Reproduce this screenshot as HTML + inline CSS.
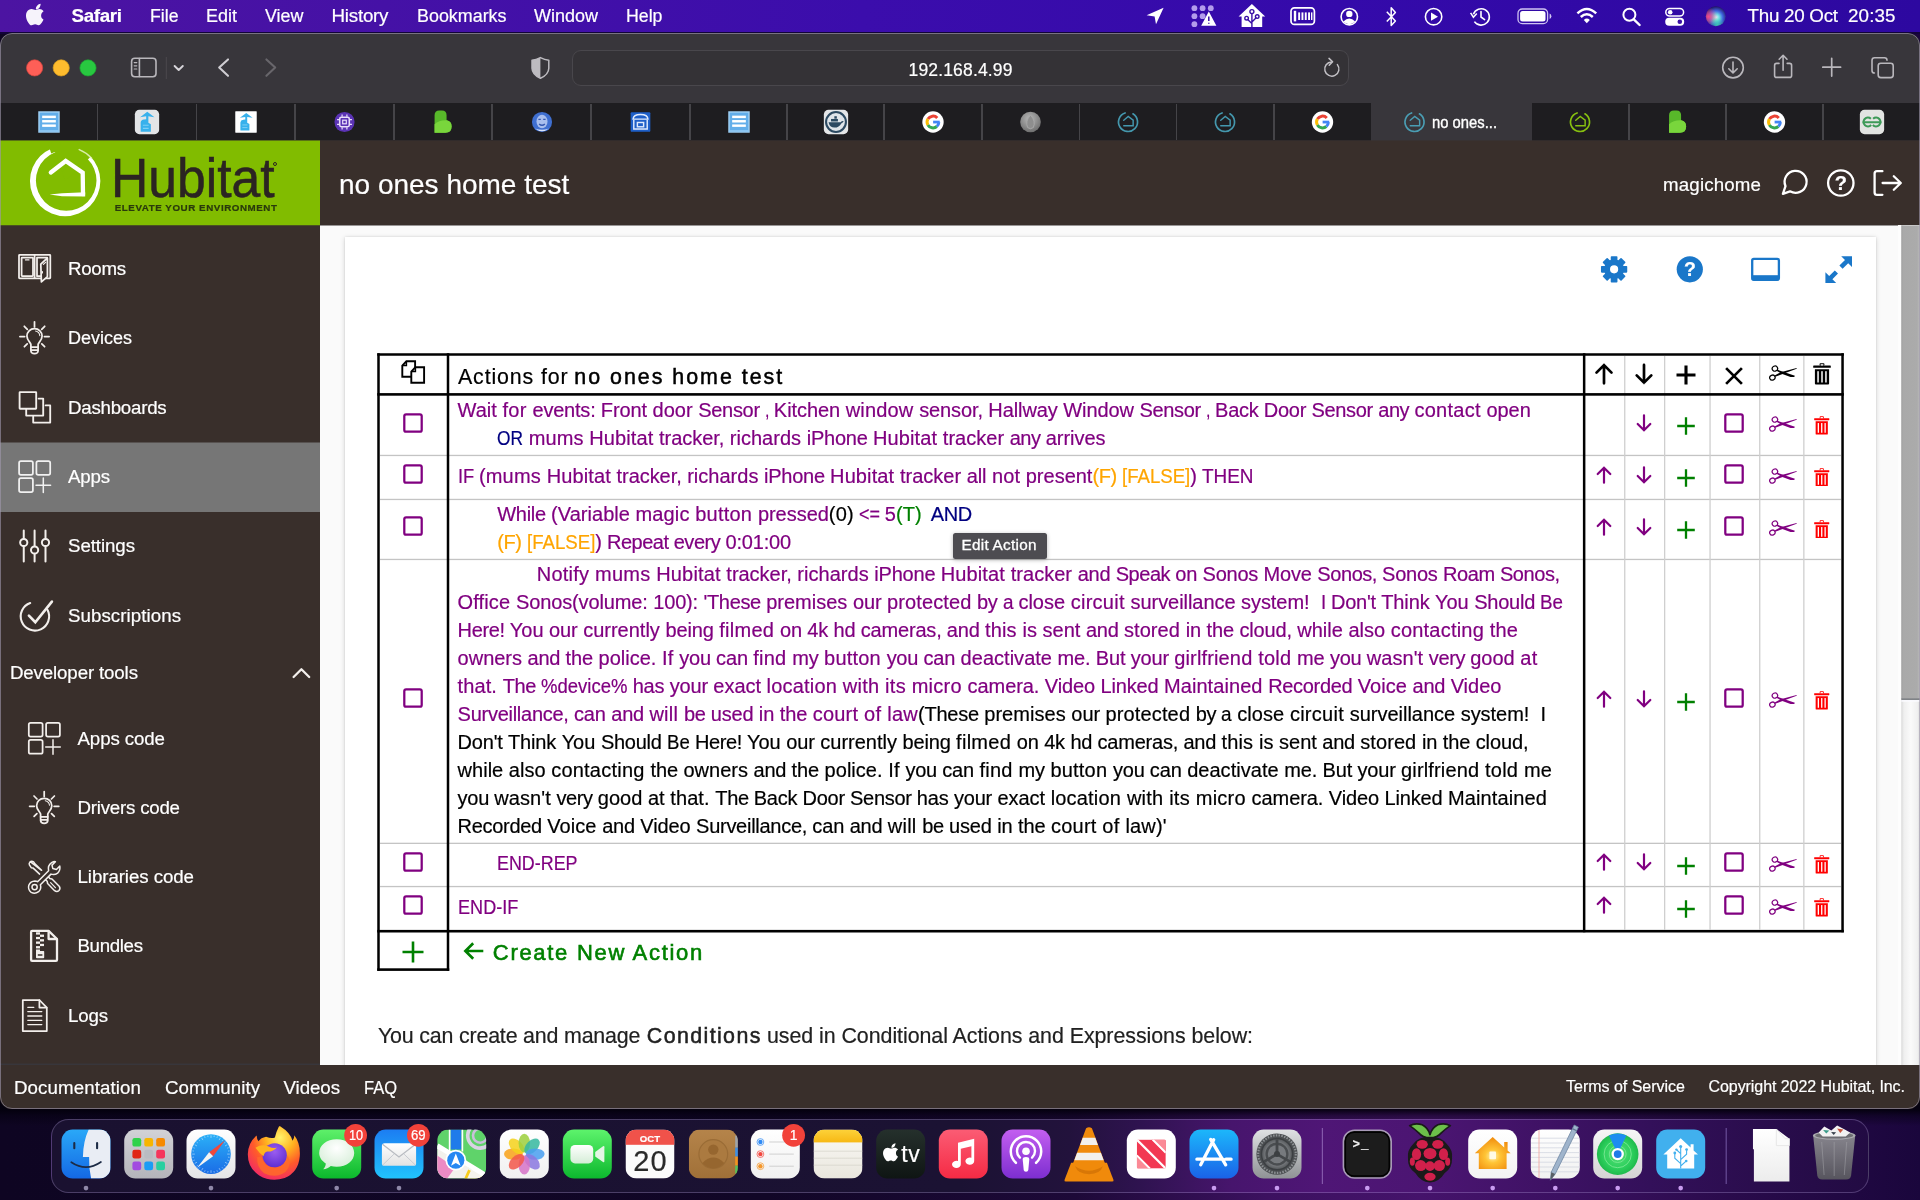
<!DOCTYPE html>
<html lang="en"><head><meta charset="utf-8"><title>no ones home test</title>
<style>
*{box-sizing:border-box;margin:0;padding:0}
html,body{width:1920px;height:1200px;overflow:hidden;background:#12062a}
body{position:relative;font-family:"Liberation Sans",sans-serif;-webkit-font-smoothing:antialiased}
body div,body svg,body span.t{position:absolute;display:block}
.t{white-space:pre;line-height:1;-webkit-text-stroke-width:.2px}
.t span{letter-spacing:inherit}
.ln{left:0;top:0;width:0;height:0}

</style></head>
<body>
<div id="root" style="left:0;top:0;width:1920px;height:1200px;will-change:transform">
<div style="left:0;top:0;width:1920px;height:1200px;background:linear-gradient(90deg,#0e0522 0%,#110627 40%,#1d0938 56%,#3c1160 66%,#45136b 74%,#3a1060 82%,#2a0b4c 90%,#1a063c 100%)"></div>
<div style="left:0;top:0;width:1920px;height:33px;background:linear-gradient(90deg,#4c14a2 0%,#4511a6 20%,#3b0dac 45%,#340aaa 70%,#2d08a0 100%)"></div>
<div style="left:0;top:32px;width:1920px;height:2px;background:#120338"></div>
<div style="left:0;top:1100px;width:1920px;height:26px;background:linear-gradient(180deg,rgba(3,0,12,.95),rgba(3,0,12,.9) 38%,rgba(3,0,12,.45) 60%,rgba(3,0,12,0))"></div>
<div id="win" style="left:0;top:0;width:1920px;height:1200px;clip-path:inset(33px 0 91px 0 round 12px)">
<div style="left:0px;top:33px;width:1920px;height:1076px;background:#38363b;"></div>
<svg style="left:0px;top:103px" width="1920" height="38" viewBox="0 103 1920 38"><rect x="0" y="103" width="1920" height="37.5" fill="#1e1d20"/></svg>
<svg style="left:20px;top:55px" width="90" height="26" viewBox="20 55 90 26"><circle cx="34.6" cy="67.9" r="8.1" fill="#fe5f57" stroke="#d8453d" stroke-width=".7"/><circle cx="61.2" cy="67.9" r="8.1" fill="#febc2e" stroke="#d79c1f" stroke-width=".7"/><circle cx="88.0" cy="67.9" r="8.1" fill="#28c840" stroke="#1ba430" stroke-width=".7"/></svg>
<div style="left:572px;top:50px;width:777px;height:36px;border-radius:9px;background:#343236;border:1.3px solid #49474c"></div>
<span class="t" style="top:62px;font-size:17.5px;color:#fff;letter-spacing:0.165px;left:908.50px;">192.168.4.99</span>
<div style="left:96.75px;top:104px;width:1.5px;height:36px;background:#454448"></div>
<div style="left:195.75px;top:104px;width:1.5px;height:36px;background:#454448"></div>
<div style="left:294.25px;top:104px;width:1.5px;height:36px;background:#454448"></div>
<div style="left:393.25px;top:104px;width:1.5px;height:36px;background:#454448"></div>
<div style="left:491.25px;top:104px;width:1.5px;height:36px;background:#454448"></div>
<div style="left:590.25px;top:104px;width:1.5px;height:36px;background:#454448"></div>
<div style="left:689.25px;top:104px;width:1.5px;height:36px;background:#454448"></div>
<div style="left:786.25px;top:104px;width:1.5px;height:36px;background:#454448"></div>
<div style="left:883.25px;top:104px;width:1.5px;height:36px;background:#454448"></div>
<div style="left:981.25px;top:104px;width:1.5px;height:36px;background:#454448"></div>
<div style="left:1078.75px;top:104px;width:1.5px;height:36px;background:#454448"></div>
<div style="left:1175.75px;top:104px;width:1.5px;height:36px;background:#454448"></div>
<div style="left:1273.25px;top:104px;width:1.5px;height:36px;background:#454448"></div>
<div style="left:1628.25px;top:104px;width:1.5px;height:36px;background:#454448"></div>
<div style="left:1725.25px;top:104px;width:1.5px;height:36px;background:#454448"></div>
<div style="left:1822.25px;top:104px;width:1.5px;height:36px;background:#454448"></div>
<div style="left:1371px;top:103px;width:161px;height:37.5px;background:#38363b"></div>
<span class="t" style="top:115px;font-size:16.6px;color:#fff;letter-spacing:0px;transform:scaleX(0.8917);transform-origin:0 0;left:1432.3px;-webkit-text-stroke:0.35px #fff;">no ones...</span>
<svg style="left:0;top:40px" width="1920" height="60" viewBox="0 40 1920 60"><g fill="none" stroke="#b9b7bc" stroke-width="1.6" stroke-linecap="round" stroke-linejoin="round" ><rect x="131.6" y="58.3" width="24.4" height="18.4" rx="3.2"/><path d="M139.4 58.6 V76.4"/><path d="M134.2 62.6 H136.8 M134.2 65.8 H136.8 M134.2 69 H136.8" stroke-width="1.2"/></g><rect x="165.8" y="57" width="1" height="22" fill="#4b494e"/><g fill="none" stroke="#d6d4d9" stroke-width="1.9" stroke-linecap="round" stroke-linejoin="round" ><path d="M174.6 66 L178.7 70 L182.8 66"/></g><g fill="none" stroke="#cfcdd2" stroke-width="2.1" stroke-linecap="round" stroke-linejoin="round" ><path d="M228 59.4 L219.2 67.6 L228 75.8"/></g><g fill="none" stroke="#68666b" stroke-width="2.1" stroke-linecap="round" stroke-linejoin="round" ><path d="M266.4 59.4 L275.2 67.6 L266.4 75.8"/></g><path d="M540.4 57.6 Q544.6 59.8 548.8 60.2 V68.2 Q548.6 74.6 540.4 78.2 Q532.2 74.6 532 68.2 V60.2 Q536.2 59.8 540.4 57.6 Z" fill="#38363b" stroke="#bdbbc0" stroke-width="1.5" stroke-linejoin="round"/><path d="M540.4 57.6 Q536.2 59.8 532 60.2 V68.2 Q532.2 74.6 540.4 78.2 Z" fill="#bdbbc0"/><g fill="none" stroke="#c2c0c5" stroke-width="1.5" stroke-linecap="round" stroke-linejoin="round" ><path d="M1337.4 64.6 A7.1 7.1 0 1 1 1331.6 61.9"/><path d="M1329.0 58.4 L1332.6 61.8 L1329.2 65.2"/></g><g fill="none" stroke="#b9b7bc" stroke-width="1.6" stroke-linecap="round" stroke-linejoin="round" ><circle cx="1733" cy="67.6" r="10.3"/><path d="M1733 62 V72.6 M1728.8 68.8 L1733 73 L1737.2 68.8"/></g><g fill="none" stroke="#b9b7bc" stroke-width="1.6" stroke-linecap="round" stroke-linejoin="round" ><path d="M1779 63.4 H1776.6 Q1774.6 63.4 1774.6 65.4 V75.4 Q1774.6 77.4 1776.6 77.4 H1789.6 Q1791.6 77.4 1791.6 75.4 V65.4 Q1791.6 63.4 1789.6 63.4 H1787.2"/><path d="M1783.1 55.6 V70.2 M1779.2 59.2 L1783.1 55.3 L1787 59.2"/></g><g fill="none" stroke="#b9b7bc" stroke-width="1.7" stroke-linecap="round" stroke-linejoin="round" ><path d="M1822.8 67.2 H1840.6 M1831.7 58.3 V76.1"/></g><g fill="none" stroke="#b9b7bc" stroke-width="1.6" stroke-linecap="round" stroke-linejoin="round" ><path d="M1874.4 73 Q1872 73 1872 70.4 V60.4 Q1872 57.8 1874.6 57.8 H1884.4 Q1887 57.8 1887 60.2"/><rect x="1878.2" y="63.2" width="15" height="14.4" rx="2.6"/></g></svg>
<svg style="left:0;top:104px" width="1920" height="36" viewBox="0 104 1920 36"><g transform="translate(49 122.0) scale(1.22) translate(-49 -122.0)"><rect x="40.8" y="113.8" width="16.4" height="16.4" fill="#62aeea" stroke="#9fd0f5" stroke-width="1.2"/><g fill="#fff"><rect x="43.4" y="116.8" width="11.2" height="2"/><rect x="43.4" y="120.4" width="11.2" height="2"/><rect x="43.4" y="124.0" width="11.2" height="2"/></g><rect x="40.8" y="128.6" width="16.4" height="1.6" fill="#8cc6f2"/></g><g transform="translate(147 122.0) scale(1.38) translate(-147 -122.0)"><rect x="138.2" y="113.2" width="17.6" height="17.6" rx="3.2" fill="#e3e5e7"/><path d="M142.4 129.0 V122.4 Q142.6 120.4 144.8 120.2 L146.4 120.0 V117.8 L142 118.6 L147.2 114.6 L152.4 118.6 L148 117.8 V122.6 L149.8 123.6 V129.0 Z" fill="#38b1ec"/><path d="M144 124.4 H148.2 M144 126.6 H148.2" stroke="#7fd0f5" stroke-width=".8" fill="none"/></g><g transform="translate(246 122.0) scale(1.22) translate(-246 -122.0)"><rect x="237.2" y="113.2" width="17.6" height="17.6" rx="0.4" fill="#fff"/><path d="M241.4 129.0 V122.4 Q241.6 120.4 243.8 120.2 L245.4 120.0 V117.8 L241 118.6 L246.2 114.6 L251.4 118.6 L247 117.8 V122.6 L248.8 123.6 V129.0 Z" fill="#38b1ec"/><path d="M243 124.4 H247.2 M243 126.6 H247.2" stroke="#7fd0f5" stroke-width=".8" fill="none"/></g><g transform="translate(344.5 122.0) scale(1.2) translate(-344.5 -122.0)"><circle cx="344.5" cy="122.0" r="8.4" fill="#5b33b5"/><rect x="340.5" y="118.0" width="8" height="8" rx="1.4" fill="none" stroke="#e9defa" stroke-width="1.3"/><rect x="343.0" y="120.5" width="3" height="3" fill="none" stroke="#e9defa" stroke-width="1"/><path d="M342.5 115.8 V117.6 M346.5 115.8 V117.6 M342.5 126.4 V128.2 M346.5 126.4 V128.2 M338.3 120.0 H340.1 M338.3 124.0 H340.1 M348.9 120.0 H350.7 M348.9 124.0 H350.7" stroke="#e9defa" stroke-width="1" fill="none"/></g><g transform="translate(442.5 122.0) scale(1.2) translate(-442.5 -122.0)"><path d="M435.9 131.0 V116.4 Q435.9 112.4 439.9 112.4 H442.1 Q445.9 112.4 445.9 116.4 V120.6 Q450.1 121.4 450.1 125.8 Q450.1 131.0 444.9 131.0 Z" fill="#58b82a"/><path d="M435.9 131.0 V123.8 Q439.5 120.4 445.9 120.6 Q450.1 121.4 450.1 125.8 Q450.1 131.0 444.9 131.0 Z" fill="#79d63c"/></g><g transform="translate(542 122.0) scale(1.2) translate(-542 -122.0)"><circle cx="542" cy="122.0" r="8.4" fill="#3f6fd0"/><ellipse cx="542" cy="121.6" rx="4.6" ry="5.6" fill="#a9bfee"/><path d="M539.6 123.6 Q542 125.8 544.4 123.6" stroke="#3558b0" stroke-width="1.1" fill="none"/><path d="M539 119.8 H541 M543 119.8 H545" stroke="#3558b0" stroke-width="1.1"/><path d="M536.2 127.4 Q542 132.0 547.8 127.4 Q542 129.6 536.2 127.4Z" fill="#d9e4fb"/></g><g transform="translate(640.5 122.0) scale(1.2) translate(-640.5 -122.0)"><rect x="632.3" y="113.8" width="16.4" height="16.4" rx="1" fill="#1e5fc8"/><g fill="none" stroke="#dfeafc" stroke-width="1.2"><path d="M634.9 120.2 V127.8 H646.1 V120.2"/><path d="M634.3 119.6 Q634.5 115.8 640.5 115.8 Q646.5 115.8 646.7 119.6 Z"/><rect x="637.9" y="122.4" width="5.2" height="3.6"/></g></g><g transform="translate(739 122.0) scale(1.22) translate(-739 -122.0)"><rect x="730.8" y="113.8" width="16.4" height="16.4" fill="#62aeea" stroke="#9fd0f5" stroke-width="1.2"/><g fill="#fff"><rect x="733.4" y="116.8" width="11.2" height="2"/><rect x="733.4" y="120.4" width="11.2" height="2"/><rect x="733.4" y="124.0" width="11.2" height="2"/></g><rect x="730.8" y="128.6" width="16.4" height="1.6" fill="#8cc6f2"/></g><g transform="translate(836 122.0) scale(1.38) translate(-836 -122.0)"><rect x="827.2" y="113.2" width="17.6" height="17.6" rx="3.4" fill="#e4e6e8"/><circle cx="836" cy="122.0" r="7.2" fill="#dfe5ea" stroke="#2c4a62" stroke-width="1.5"/><path d="M830.6 122.2 H839.4 Q840.4 120.8 841.6 121.4 Q840.6 122.6 839.8 123.0 Q838.4 126.0 834.8 126.0 Q831.4 126.0 830.6 122.2 Z" fill="#2c4a62"/><rect x="832.4" y="119.8" width="5" height="1.8" fill="#2c4a62"/><rect x="834.8" y="117.8" width="1.8" height="1.8" fill="#2c4a62"/></g><g transform="translate(933 122.0) scale(1.2) translate(-933 -122.0)"><circle cx="933" cy="122.0" r="8.9" fill="#fff"/><g fill="none" stroke-width="2.5"><path d="M936.55 118.6 A4.9 4.9 0 0 0 928.75 119.55" stroke="#ea4335"/><path d="M928.75 119.55 A4.9 4.9 0 0 0 928.75 124.45" stroke="#fbbc05"/><path d="M928.75 124.45 A4.9 4.9 0 0 0 936.2 125.75" stroke="#34a853"/><path d="M936.2 125.75 A4.9 4.9 0 0 0 937.85 122.2" stroke="#4285f4"/></g><rect x="933.1" y="120.9" width="5.5" height="2.3" fill="#4285f4"/></g><g transform="translate(1030.5 122.0) scale(1.2) translate(-1030.5 -122.0)"><defs><radialGradient id="gs1030" cx="45%" cy="35%" r="65%"><stop offset="0" stop-color="#b9b9b9"/><stop offset="1" stop-color="#6f6f6f"/></radialGradient></defs><circle cx="1030.5" cy="122.0" r="8.6" fill="url(#gs1030)"/><path d="M1030.5 116.4 Q1035.1 121.0 1032.9 126.6 Q1030.5 128.6 1028.1 126.6 Q1025.9 121.0 1030.5 116.4 Z" fill="#8e8e8e" stroke="#a8a8a8" stroke-width=".8"/></g><g transform="translate(1128 122.0) scale(1.12) translate(-1128 -122.0)"><g fill="none" stroke="#4497ad" stroke-linecap="round"><path d="M1125.4 113.9 A8.5 8.5 0 1 0 1132.4 114.7" stroke-width="1.5"/><path d="M1124.2 120.4 L1128.2 117.1 L1132.6 120.3 V125.4 H1124.2" stroke-width="1.3" stroke-linejoin="miter"/></g></g><g transform="translate(1225 122.0) scale(1.12) translate(-1225 -122.0)"><g fill="none" stroke="#4497ad" stroke-linecap="round"><path d="M1222.4 113.9 A8.5 8.5 0 1 0 1229.4 114.7" stroke-width="1.5"/><path d="M1221.2 120.4 L1225.2 117.1 L1229.6 120.3 V125.4 H1221.2" stroke-width="1.3" stroke-linejoin="miter"/></g></g><g transform="translate(1322.5 122.0) scale(1.2) translate(-1322.5 -122.0)"><circle cx="1322.5" cy="122.0" r="8.9" fill="#fff"/><g fill="none" stroke-width="2.5"><path d="M1326.05 118.6 A4.9 4.9 0 0 0 1318.25 119.55" stroke="#ea4335"/><path d="M1318.25 119.55 A4.9 4.9 0 0 0 1318.25 124.45" stroke="#fbbc05"/><path d="M1318.25 124.45 A4.9 4.9 0 0 0 1325.7 125.75" stroke="#34a853"/><path d="M1325.7 125.75 A4.9 4.9 0 0 0 1327.35 122.2" stroke="#4285f4"/></g><rect x="1322.6" y="120.9" width="5.5" height="2.3" fill="#4285f4"/></g><g transform="translate(1414.5 122.0) scale(1.12) translate(-1414.5 -122.0)"><g fill="none" stroke="#4a9db3" stroke-linecap="round"><path d="M1411.9 113.9 A8.5 8.5 0 1 0 1418.9 114.7" stroke-width="1.5"/><path d="M1410.7 120.4 L1414.7 117.1 L1419.1 120.3 V125.4 H1410.7" stroke-width="1.3" stroke-linejoin="miter"/></g></g><g transform="translate(1580 122.0) scale(1.12) translate(-1580 -122.0)"><g fill="none" stroke="#86bf10" stroke-linecap="round"><path d="M1577.4 113.9 A8.5 8.5 0 1 0 1584.4 114.7" stroke-width="1.5"/><path d="M1576.2 120.4 L1580.2 117.1 L1584.6 120.3 V125.4 H1576.2" stroke-width="1.3" stroke-linejoin="miter"/></g></g><g transform="translate(1677 122.0) scale(1.2) translate(-1677 -122.0)"><path d="M1670.4 131.0 V116.4 Q1670.4 112.4 1674.4 112.4 H1676.6 Q1680.4 112.4 1680.4 116.4 V120.6 Q1684.6 121.4 1684.6 125.8 Q1684.6 131.0 1679.4 131.0 Z" fill="#58b82a"/><path d="M1670.4 131.0 V123.8 Q1674 120.4 1680.4 120.6 Q1684.6 121.4 1684.6 125.8 Q1684.6 131.0 1679.4 131.0 Z" fill="#79d63c"/></g><g transform="translate(1774.5 122.0) scale(1.2) translate(-1774.5 -122.0)"><circle cx="1774.5" cy="122.0" r="8.9" fill="#fff"/><g fill="none" stroke-width="2.5"><path d="M1778.05 118.6 A4.9 4.9 0 0 0 1770.25 119.55" stroke="#ea4335"/><path d="M1770.25 119.55 A4.9 4.9 0 0 0 1770.25 124.45" stroke="#fbbc05"/><path d="M1770.25 124.45 A4.9 4.9 0 0 0 1777.7 125.75" stroke="#34a853"/><path d="M1777.7 125.75 A4.9 4.9 0 0 0 1779.35 122.2" stroke="#4285f4"/></g><rect x="1774.6" y="120.9" width="5.5" height="2.3" fill="#4285f4"/></g><g transform="translate(1872 122.0) scale(1.38) translate(-1872 -122.0)"><rect x="1863.2" y="113.2" width="17.6" height="17.6" rx="3.4" fill="#e2e4e2"/><g fill="none" stroke="#3d9a58" stroke-width="1.5"><path d="M1871.2 119.6 A3.2 3.2 0 1 0 1871.4 124.2 M1865 122.2 H1879 M1872.8 119.6 A3.2 3.2 0 1 1 1872.6 124.2"/></g></g></svg>
<svg style="left:0px;top:140px" width="1920" height="86" viewBox="0 140 1920 86"><rect x="0" y="140.5" width="1920" height="85" fill="#392f2b"/></svg>
<svg style="left:0px;top:140px" width="320" height="86" viewBox="0 140 320 86"><rect x="0" y="140.5" width="320" height="85" fill="#81bc00"/></svg>
<svg style="left:0px;top:225px" width="320" height="839" viewBox="0 225 320 839"><rect x="0" y="225.5" width="320" height="838" fill="#392f2b"/></svg>
<svg style="left:0px;top:442px" width="320" height="70" viewBox="0 442 320 70"><rect x="0" y="442.5" width="320" height="69.5" fill="#767676"/></svg>
<svg style="left:320px;top:225px" width="1578" height="841" viewBox="320 225 1578 841"><rect x="320" y="225.5" width="1578" height="840" fill="#fafafa"/></svg>
<div style="left:1898px;top:225px;width:4px;height:840px;background:#fdfdfd"></div>
<svg style="left:1901px;top:225px" width="19" height="840" viewBox="1901 225 19 840"><defs><linearGradient id="sbt" x1="0" y1="0" x2="1" y2="0"><stop offset="0" stop-color="#d9d9d9"/><stop offset=".14" stop-color="#efefef"/><stop offset=".5" stop-color="#fafafa"/><stop offset=".86" stop-color="#f0f0f0"/><stop offset="1" stop-color="#dcdcdc"/></linearGradient><linearGradient id="sbh" x1="0" y1="0" x2="1" y2="0"><stop offset="0" stop-color="#a2a2a2"/><stop offset=".12" stop-color="#a9a9a9"/><stop offset=".85" stop-color="#ababab"/><stop offset="1" stop-color="#bcbcbc"/></linearGradient></defs><rect x="1901.3" y="225" width="18.7" height="840" fill="url(#sbt)"/><rect x="1901.3" y="225.4" width="18.7" height="473.2" fill="url(#sbh)"/><rect x="1901.3" y="698.2" width="18.7" height="1.9" fill="#808387"/><rect x="1901.3" y="700.1" width="18.7" height="1.6" fill="#fbfbff"/></svg>
<div style="left:345px;top:237px;width:1531px;height:840px;background:#fff;box-shadow:0 1px 5px rgba(0,0,0,.16),0 0 2px rgba(0,0,0,.1)"></div>
<span class="t" style="top:171px;font-size:28px;color:#fff;letter-spacing:-0.005px;left:339px;">no ones home test</span>
<span class="t" style="top:176px;font-size:18.7px;color:#fff;letter-spacing:0.174px;left:1663px;">magichome</span>
<span class="t" style="top:151px;font-size:55.5px;color:#2b2422;letter-spacing:0px;transform:scaleX(0.9303);transform-origin:0 0;left:110.8px;-webkit-text-stroke:0.55px #2b2422;">Hubitat</span>
<span class="t" style="top:203px;font-size:9.8px;color:#2a3a0c;font-weight:700;letter-spacing:0.548px;left:114.7px;">ELEVATE YOUR ENVIRONMENT</span>
<span class="t" style="top:260px;font-size:18.7px;color:#fff;letter-spacing:-0.301px;left:68px;">Rooms</span>
<span class="t" style="top:329px;font-size:18.7px;color:#fff;letter-spacing:0px;transform:scaleX(0.9629);transform-origin:0 0;left:68px;">Devices</span>
<span class="t" style="top:399px;font-size:18.7px;color:#fff;letter-spacing:-0.230px;left:68px;">Dashboards</span>
<span class="t" style="top:468px;font-size:18.7px;color:#fff;letter-spacing:-0.203px;left:68px;">Apps</span>
<span class="t" style="top:537px;font-size:18.7px;color:#fff;letter-spacing:-0.076px;left:68px;">Settings</span>
<span class="t" style="top:607px;font-size:18.7px;color:#fff;letter-spacing:0.068px;left:68px;">Subscriptions</span>
<span class="t" style="top:664px;font-size:18.7px;color:#fff;letter-spacing:-0.133px;left:10px;">Developer tools</span>
<span class="t" style="top:730px;font-size:18.7px;color:#fff;letter-spacing:-0.102px;left:77.5px;">Apps code</span>
<span class="t" style="top:799px;font-size:18.7px;color:#fff;letter-spacing:-0.217px;left:77.5px;">Drivers code</span>
<span class="t" style="top:868px;font-size:18.7px;color:#fff;letter-spacing:-0.069px;left:77.5px;">Libraries code</span>
<span class="t" style="top:937px;font-size:18.7px;color:#fff;letter-spacing:-0.341px;left:77.5px;">Bundles</span>
<span class="t" style="top:1007px;font-size:18.7px;color:#fff;letter-spacing:-0.177px;left:68px;">Logs</span>
<svg style="left:20px;top:140px" width="100" height="86" viewBox="20 140 100 86"><path fill="#fff" fill-rule="evenodd" d="M29.95 181 a35.2 35.2 0 1 0 70.4 0 a35.2 35.2 0 1 0 -70.4 0 Z M35.9 180.5 a30.3 30.3 0 1 0 60.6 0 a30.3 30.3 0 1 0 -60.6 0 Z"/><path fill="#81bc00" d="M65.2 181 L51.6 142 L84 142 L96.5 152.5 L91.2 156.2 Z"/><path fill="#81bc00" d="M65.2 181 L55.9 151.6 L51.2 153.4 L48 143 L60 142 Z"/><path d="M79.2 149.6 Q86.6 152.6 91.6 158.2" fill="none" stroke="#e9f6c4" stroke-width="1.5" stroke-linecap="round" opacity=".85"/><path d="M50.8 172.5 L65.7 161.0 L82.7 172.6 L83.0 194.2" fill="none" stroke="#fff" stroke-width="4.3" stroke-linejoin="miter" stroke-linecap="round"/><path d="M85.15 192.2 L85.2 196.5 L62 196.3 L49.6 194.5 L62 193.2 Z" fill="#fff"/></svg>
<div style="left:272.5px;top:161.5px;width:4.6px;height:4.6px;border-radius:50%;border:1px solid #2b2422"></div>
<svg style="left:0;top:0" width="320" height="1063" viewBox="0 0 320 1063"><g fill="none" stroke="#f3efec" stroke-width="1.75" stroke-linecap="round" stroke-linejoin="round" ><g transform="translate(0 0)"><rect x="19" y="254.8" width="31.3" height="23.6" rx="0.6"/><rect x="21.6" y="257.5" width="11.4" height="18.6" rx="0.5"/><path d="M34.6 255 V278.2"/><path d="M41.0 276.2 H37 V257.6 H47.2"/><path d="M40.8 264.2 L47.4 258 V276.6 L41.4 281.9 Z" fill="#3a2f2b"/><path d="M43.4 264.4 L45.6 262.4 M42.4 271.6 V273" stroke-width="1.2"/><path d="M25.4 259.9 H29" stroke-width="1.1"/></g></g><g fill="none" stroke="#f3efec" stroke-width="1.75" stroke-linecap="round" stroke-linejoin="round" ><g transform="translate(0 0)"><path d="M30.9 347 V344.4 C30.9 342.6 26.9 340.6 26.9 336.1 C26.9 331.9 30.3 328.6 34.5 328.6 C38.7 328.6 42.1 331.9 42.1 336.1 C42.1 340.6 38.1 342.6 38.1 344.4 V347"/><path d="M30.9 347.2 H38.1 M30.9 350.2 H38.1 M30.9 347.2 V351 Q31.2 353.7 34.5 353.7 Q37.8 353.7 38.1 351 V347.2"/><path d="M34.5 321.8 V326.9 M19.9 336.6 H24.6 M44.4 336.6 H49.1 M24.3 326.3 L27.3 329.3 M44.7 326.3 L41.7 329.3 M24.4 346.7 L27.2 343.9 M44.6 346.7 L41.8 343.9"/><path d="M35.6 331 Q39.4 331.8 39.8 335.6" stroke-width="1.1"/></g></g><g fill="none" stroke="#f3efec" stroke-width="1.85" stroke-linecap="round" stroke-linejoin="round" ><g transform="translate(0 0)"><rect x="19.6" y="392.1" width="16.6" height="16.6" rx="0.4"/><path d="M38.6 398.6 H43.2 V415.6 H26.2 V409.6"/><path d="M45.6 405.4 H50.2 V422.6 H33.2 V416.4"/></g></g><g fill="none" stroke="#f1f1f1" stroke-width="1.75" stroke-linecap="round" stroke-linejoin="round" ><g transform="translate(0 0)"><rect x="19.1" y="461.1" width="13.8" height="13.8" rx="1.8"/><rect x="36.4" y="461.1" width="13.8" height="13.8" rx="1.8"/><rect x="19.1" y="478.2" width="13.8" height="13.8" rx="1.8"/><path d="M36 485.3 H50.6 M43.3 478 V492.6" stroke-width="1.5"/></g></g><g fill="none" stroke="#f3efec" stroke-width="2.0" stroke-linecap="round" stroke-linejoin="round" ><g transform="translate(0 0)"><path d="M23.75 530.4 V538.6 M23.75 546.4 V561.4 M34.6 530.4 V546.1 M34.6 553.9 V561.4 M45.5 530.4 V538.6 M45.5 546.4 V561.4"/><circle cx="23.75" cy="542.5" r="3.6"/><circle cx="34.6" cy="550" r="3.6"/><circle cx="45.5" cy="542.5" r="3.6"/></g></g><g fill="none" stroke="#f3efec" stroke-width="1.6" stroke-linecap="round" stroke-linejoin="round" ><g transform="translate(0 0)"><path d="M30.2 603.0 A14.2 14.2 0 1 0 47.6 610.0" stroke-width="2.1"/><path d="M28.9 615.6 L35.3 622.2 L51.9 601.6" stroke-width="2.6" stroke-linejoin="miter"/></g></g><g fill="none" stroke="#f3efec" stroke-width="1.75" stroke-linecap="round" stroke-linejoin="round" ><g transform="translate(9.7 261.7)"><rect x="19.1" y="461.1" width="13.8" height="13.8" rx="1.8"/><rect x="36.4" y="461.1" width="13.8" height="13.8" rx="1.8"/><rect x="19.1" y="478.2" width="13.8" height="13.8" rx="1.8"/><path d="M36 485.3 H50.6 M43.3 478 V492.6" stroke-width="1.5"/></g></g><g fill="none" stroke="#f3efec" stroke-width="1.75" stroke-linecap="round" stroke-linejoin="round" ><g transform="translate(9.7 469.7)"><path d="M30.9 347 V344.4 C30.9 342.6 26.9 340.6 26.9 336.1 C26.9 331.9 30.3 328.6 34.5 328.6 C38.7 328.6 42.1 331.9 42.1 336.1 C42.1 340.6 38.1 342.6 38.1 344.4 V347"/><path d="M30.9 347.2 H38.1 M30.9 350.2 H38.1 M30.9 347.2 V351 Q31.2 353.7 34.5 353.7 Q37.8 353.7 38.1 351 V347.2"/><path d="M34.5 321.8 V326.9 M19.9 336.6 H24.6 M44.4 336.6 H49.1 M24.3 326.3 L27.3 329.3 M44.7 326.3 L41.7 329.3 M24.4 346.7 L27.2 343.9 M44.6 346.7 L41.8 343.9"/><path d="M35.6 331 Q39.4 331.8 39.8 335.6" stroke-width="1.1"/></g></g><g fill="none" stroke="#f3efec" stroke-width="1.5" stroke-linecap="round" stroke-linejoin="round" ><g transform="translate(28 860.5)"><path d="M2.2 1.2 Q0.6 2.6 1.4 4.4 L3.2 7.2 L5.2 7.6 L11.6 13.6 M13.6 9.8 L7.2 3.6 L5.6 1.4 Q3.8 0.2 2.2 1.2 Z" /><path d="M17.6 19.4 L19.2 20.8 L19.6 23.0 L26.6 30.2 Q29.0 32.0 31.0 30.0 Q32.8 28.0 31.2 25.8 L24.0 18.4 L21.8 18.0 L20.6 16.6"/><path d="M22.6 22.2 L27.4 27.2" stroke-width="1.2"/><path d="M9.6 21.2 L20.6 10.2 Q19.4 4.6 24.0 1.8 Q26.0 0.8 27.4 1.2 L24.0 4.6 L24.8 8.0 L28.4 9.0 L31.8 5.6 Q32.6 9.8 29.6 12.6 Q26.6 14.8 23.0 13.6 L12.4 24.2 Q13.6 28.4 10.6 31.2 Q7.0 33.8 3.2 31.8 Q-0.4 29.2 0.8 24.8 Q2.4 20.6 7.0 20.4 Q8.4 20.4 9.6 21.2 Z"/><circle cx="6.6" cy="26.6" r="2.6"/></g></g><g fill="none" stroke="#f3efec" stroke-width="2.3" stroke-linecap="round" stroke-linejoin="round" ><g transform="translate(0 0)"><path d="M31.1 931.9 Q31.1 930.9 32.1 930.9 H48.6 L57 939.0 V959.8 Q57 960.9 56 960.9 H32.1 Q31.1 960.9 31.1 959.8 Z"/><path d="M48.6 931.4 V939 H56.6"/></g></g><g fill="#f3efec" transform="translate(0 0)"><rect x="36" y="932.3" width="4" height="2.3"/><rect x="40" y="934.6" width="4" height="2.3"/><rect x="36" y="936.9" width="4" height="2.3"/><rect x="40" y="939.2" width="4" height="2.3"/><rect x="36" y="941.5" width="4" height="2.3"/><rect x="40" y="943.8" width="4" height="2.3"/><rect x="36" y="946.1" width="4" height="2.3"/><path d="M36 949.6 H40 V951 H43.6 Q44.2 951 44.2 951.8 V957.4 Q44.2 958.2 43.4 958.2 H36.8 Q36 958.2 36 957.4 Z M37.8 954.2 V955.8 H42.4 V954.2 Z" fill-rule="evenodd"/></g><g fill="none" stroke="#f3efec" stroke-width="1.75" stroke-linecap="round" stroke-linejoin="round" ><g transform="translate(0 0)"><path d="M22.8 1000 H39.4 L46.8 1007.6 V1031 H22.8 Z"/><path d="M39.4 1000.2 V1007.6 H46.6"/><path d="M27.8 1007.3 H33.8 M27.8 1011.6 H41.8 M27.8 1016 H41.8 M27.8 1020.3 H41.8 M27.8 1024.6 H41.8" stroke-width="1.35"/></g></g><g fill="none" stroke="#f3efec" stroke-width="2.3" stroke-linecap="round" stroke-linejoin="round" stroke-linecap="butt" stroke-linejoin="miter"><path d="M293.6 677 L301.4 669.2 L309.2 677"/></g></svg>
<svg style="left:1770px;top:158px" width="150" height="50" viewBox="1770 158 150 50"><g fill="none" stroke="#fff" stroke-width="2.3" stroke-linecap="round" stroke-linejoin="round" ><path d="M1782.9 193.8 L1785.5 186.2 A11.0 11.0 0 1 1 1790.0 191.3 Z"/></g><g fill="none" stroke="#fff" stroke-width="2.3" stroke-linecap="round" stroke-linejoin="round" ><circle cx="1840.8" cy="183.0" r="12.7"/></g><g fill="none" stroke="#fff" stroke-width="2.3" stroke-linecap="round" stroke-linejoin="round" ><path d="M1882.4 171.2 H1877.0 Q1874.6 171.2 1874.6 173.6 V192.4 Q1874.6 194.8 1877.0 194.8 H1882.4"/><path d="M1882.6 183 H1900.6 M1893.8 176.2 L1900.8 183 L1893.8 189.8"/></g></svg>
<span class="t" style="top:173px;font-size:20px;color:#fff;font-weight:700;left:1840.9px;transform:translateX(-50%);">?</span>
<svg style="left:1590px;top:245px" width="280" height="50" viewBox="1590 245 280 50"><path d="M1611.53 260.47 L1611.54 256.96 L1616.66 256.96 L1616.67 260.47 L1618.53 261.24 L1621.02 258.77 L1624.63 262.38 L1622.16 264.87 L1622.93 266.73 L1626.44 266.74 L1626.44 271.86 L1622.93 271.87 L1622.16 273.73 L1624.63 276.22 L1621.02 279.83 L1618.53 277.36 L1616.67 278.13 L1616.66 281.64 L1611.54 281.64 L1611.53 278.13 L1609.67 277.36 L1607.18 279.83 L1603.57 276.22 L1606.04 273.73 L1605.27 271.87 L1601.76 271.86 L1601.76 266.74 L1605.27 266.73 L1606.04 264.87 L1603.57 262.38 L1607.18 258.77 L1609.67 261.24 Z M1609.20 269.30 a4.9 4.9 0 1 0 9.8 0 a4.9 4.9 0 1 0 -9.8 0 Z" fill="#1a77c9" fill-rule="evenodd" stroke="#1a77c9" stroke-width="1.6" stroke-linejoin="round"/><circle cx="1689.8" cy="269.3" r="13.1" fill="#1a77c9"/><rect x="1752.2" y="258.9" width="26.7" height="20.9" rx="1.6" fill="none" stroke="#1a77c9" stroke-width="2.3"/><rect x="1752.2" y="275.2" width="26.7" height="5" fill="#1a77c9"/><g fill="#1a77c9"><path d="M1841.2 256.2 H1852 V267 L1848.2 263.2 L1842.6 268.8 L1839.4 265.6 L1845 260 Z"/><path d="M1825.4 283 V272.2 L1829.2 276 L1834.8 270.4 L1838 273.6 L1832.4 279.2 L1836.2 283 Z"/></g></svg>
<span class="t" style="top:260px;font-size:19.5px;color:#fff;font-weight:700;left:1689.9px;transform:translateX(-50%);">?</span>
<svg style="left:380px;top:454px" width="1461" height="3" viewBox="380 454 1461 3"><rect x="380" y="454.8" width="1461" height="1.3" fill="#c4c4c4"/></svg>
<svg style="left:380px;top:498px" width="1461" height="3" viewBox="380 498 1461 3"><rect x="380" y="498.8" width="1461" height="1.3" fill="#c4c4c4"/></svg>
<svg style="left:380px;top:558px" width="1461" height="3" viewBox="380 558 1461 3"><rect x="380" y="558.8" width="1461" height="1.3" fill="#c4c4c4"/></svg>
<svg style="left:380px;top:842px" width="1461" height="2" viewBox="380 842 1461 2"><rect x="380" y="842.7" width="1461" height="1.3" fill="#c4c4c4"/></svg>
<svg style="left:380px;top:885px" width="1461" height="3" viewBox="380 885 1461 3"><rect x="380" y="885.9" width="1461" height="1.3" fill="#c4c4c4"/></svg>
<svg style="left:1624px;top:356px" width="2" height="574" viewBox="1624 356 2 574"><rect x="1624.1" y="356" width="1.3" height="573.5" fill="#cfcfcf"/></svg>
<svg style="left:1664px;top:356px" width="2" height="574" viewBox="1664 356 2 574"><rect x="1664" y="356" width="1.3" height="573.5" fill="#cfcfcf"/></svg>
<svg style="left:1709px;top:356px" width="2" height="574" viewBox="1709 356 2 574"><rect x="1709.4" y="356" width="1.3" height="573.5" fill="#cfcfcf"/></svg>
<svg style="left:1759px;top:356px" width="2" height="574" viewBox="1759 356 2 574"><rect x="1759.1" y="356" width="1.3" height="573.5" fill="#cfcfcf"/></svg>
<svg style="left:1803px;top:356px" width="2" height="574" viewBox="1803 356 2 574"><rect x="1803.2" y="356" width="1.3" height="573.5" fill="#cfcfcf"/></svg>
<svg style="left:377px;top:353px" width="1467" height="3" viewBox="377 353 1467 3"><rect x="377.25" y="353.25" width="1466.6" height="2.5" fill="#000"/></svg>
<svg style="left:377px;top:393px" width="1467" height="3" viewBox="377 393 1467 3"><rect x="377.25" y="393.1" width="1466.6" height="2.6" fill="#000"/></svg>
<svg style="left:377px;top:929px" width="1467" height="4" viewBox="377 929 1467 4"><rect x="377.25" y="929.9" width="1466.6" height="2.6" fill="#000"/></svg>
<svg style="left:377px;top:353px" width="3" height="618" viewBox="377 353 3 618"><rect x="377.25" y="353.25" width="2.5" height="617.6" fill="#000"/></svg>
<svg style="left:446px;top:353px" width="4" height="618" viewBox="446 353 4 618"><rect x="446.75" y="353.25" width="2.5" height="617.6" fill="#000"/></svg>
<svg style="left:377px;top:968px" width="73" height="3" viewBox="377 968 73 3"><rect x="377.25" y="968.3" width="72" height="2.6" fill="#000"/></svg>
<svg style="left:1582px;top:353px" width="4" height="580" viewBox="1582 353 4 580"><rect x="1582.9" y="353.25" width="2.5" height="579" fill="#000"/></svg>
<svg style="left:1841px;top:353px" width="3" height="580" viewBox="1841 353 3 580"><rect x="1841.3" y="353.25" width="2.5" height="579" fill="#000"/></svg>
<span class="t" style="top:367px;font-size:21.4px;color:#000;letter-spacing:0.854px;left:458px;">Actions for</span>
<span class="t" style="top:367px;font-size:21.4px;color:#000;letter-spacing:1.994px;left:574.3px;-webkit-text-stroke:0.5px #000;">no ones home test</span>
<div class="ln"><span class="t" style="top:400px;font-size:20px;color:#800080;letter-spacing:0.007px;left:457.60px;">Wait </span><span class="t" style="top:400px;font-size:20px;color:#800080;letter-spacing:0.274px;left:502.46px;">for </span><span class="t" style="top:400px;font-size:20px;color:#800080;letter-spacing:-0.205px;left:532.47px;">events: </span><span class="t" style="top:400px;font-size:20px;color:#800080;letter-spacing:-0.102px;left:600.87px;">Front </span><span class="t" style="top:400px;font-size:20px;color:#800080;letter-spacing:0.024px;left:652.51px;">door </span><span class="t" style="top:400px;font-size:20px;color:#800080;letter-spacing:-0.307px;left:698.22px;">Sensor </span><span class="t" style="top:400px;font-size:20px;color:#800080;letter-spacing:0px;transform:scaleX(0.7962);transform-origin:0 0;left:765.01px;">, </span><span class="t" style="top:400px;font-size:20px;color:#800080;letter-spacing:-0.054px;left:773.87px;">Kitchen </span><span class="t" style="top:400px;font-size:20px;color:#800080;letter-spacing:0.166px;left:845.70px;">window </span><span class="t" style="top:400px;font-size:20px;color:#800080;letter-spacing:-0.111px;left:919.13px;">sensor, </span><span class="t" style="top:400px;font-size:20px;color:#800080;letter-spacing:-0.072px;left:988.28px;">Hallway </span><span class="t" style="top:400px;font-size:20px;color:#800080;letter-spacing:-0.081px;left:1063.29px;">Window </span><span class="t" style="top:400px;font-size:20px;color:#800080;letter-spacing:-0.307px;left:1139.42px;">Sensor </span><span class="t" style="top:400px;font-size:20px;color:#800080;letter-spacing:0px;transform:scaleX(0.7962);transform-origin:0 0;left:1206.21px;">, </span><span class="t" style="top:400px;font-size:20px;color:#800080;letter-spacing:-0.250px;left:1215.07px;">Back </span><span class="t" style="top:400px;font-size:20px;color:#800080;letter-spacing:-0.275px;left:1263.85px;">Door </span><span class="t" style="top:400px;font-size:20px;color:#800080;letter-spacing:-0.307px;left:1311.38px;">Sensor </span><span class="t" style="top:400px;font-size:20px;color:#800080;letter-spacing:-0.391px;left:1378.17px;">any </span><span class="t" style="top:400px;font-size:20px;color:#800080;letter-spacing:0.259px;left:1414.42px;">contact </span><span class="t" style="top:400px;font-size:20px;color:#800080;letter-spacing:-0.085px;left:1486.54px;">open</span></div>
<div class="ln"><span class="t" style="top:428px;font-size:20px;color:#000080;letter-spacing:0px;transform:scaleX(0.8649);transform-origin:0 0;left:497.20px;">OR</span><span class="t" style="top:428px;font-size:20px;color:#800080;letter-spacing:0.073px;left:523.15px;"> mums </span><span class="t" style="top:428px;font-size:20px;color:#800080;letter-spacing:0.125px;left:589.15px;">Hubitat </span><span class="t" style="top:428px;font-size:20px;color:#800080;letter-spacing:-0.048px;left:659.08px;">tracker, </span><span class="t" style="top:428px;font-size:20px;color:#800080;letter-spacing:0.027px;left:729.79px;">richards </span><span class="t" style="top:428px;font-size:20px;color:#800080;letter-spacing:-0.238px;left:806.73px;">iPhone </span><span class="t" style="top:428px;font-size:20px;color:#800080;letter-spacing:0.125px;left:872.91px;">Hubitat </span><span class="t" style="top:428px;font-size:20px;color:#800080;letter-spacing:0.014px;left:942.85px;">tracker </span><span class="t" style="top:428px;font-size:20px;color:#800080;letter-spacing:-0.412px;left:1009.64px;">any </span><span class="t" style="top:428px;font-size:20px;color:#800080;letter-spacing:-0.060px;left:1045.81px;">arrives</span></div>
<div class="ln"><span class="t" style="top:466px;font-size:20px;color:#800080;letter-spacing:0px;transform:scaleX(0.9133);transform-origin:0 0;left:457.60px;">IF </span><span class="t" style="top:466px;font-size:20px;color:#800080;letter-spacing:0.186px;left:478.92px;">(mums </span><span class="t" style="top:466px;font-size:20px;color:#800080;letter-spacing:0.113px;left:546.71px;">Hubitat </span><span class="t" style="top:466px;font-size:20px;color:#800080;letter-spacing:-0.059px;left:616.55px;">tracker, </span><span class="t" style="top:466px;font-size:20px;color:#800080;letter-spacing:0.016px;left:687.16px;">richards </span><span class="t" style="top:466px;font-size:20px;color:#800080;letter-spacing:-0.251px;left:764.01px;">iPhone </span><span class="t" style="top:466px;font-size:20px;color:#800080;letter-spacing:0.113px;left:830.09px;">Hubitat </span><span class="t" style="top:466px;font-size:20px;color:#800080;letter-spacing:0.003px;left:899.94px;">tracker </span><span class="t" style="top:466px;font-size:20px;color:#800080;letter-spacing:-0.047px;left:966.64px;">all </span><span class="t" style="top:466px;font-size:20px;color:#800080;letter-spacing:0.092px;left:992.03px;">not </span><span class="t" style="top:466px;font-size:20px;color:#800080;letter-spacing:-0.007px;left:1025.76px;">present</span><span class="t" style="top:466px;font-size:20px;color:#ffa500;letter-spacing:-0.368px;left:1092.43px;">(F) </span><span class="t" style="top:466px;font-size:20px;color:#ffa500;letter-spacing:0px;transform:scaleX(0.9308);transform-origin:0 0;left:1122.05px;">[FALSE]</span><span class="t" style="top:466px;font-size:20px;color:#800080;letter-spacing:-0.192px;left:1190.35px;">) </span><span class="t" style="top:466px;font-size:20px;color:#800080;letter-spacing:0px;transform:scaleX(0.9460);transform-origin:0 0;left:1202.19px;">THEN</span></div>
<div class="ln"><span class="t" style="top:504px;font-size:20px;color:#800080;letter-spacing:-0.278px;left:497.20px;">While </span><span class="t" style="top:504px;font-size:20px;color:#800080;letter-spacing:0.028px;left:551.11px;">(Variable </span><span class="t" style="top:504px;font-size:20px;color:#800080;letter-spacing:0.147px;left:635.51px;">magic </span><span class="t" style="top:504px;font-size:20px;color:#800080;letter-spacing:0.202px;left:695.30px;">button </span><span class="t" style="top:504px;font-size:20px;color:#800080;letter-spacing:-0.029px;left:757.89px;">pressed</span><span class="t" style="top:504px;font-size:20px;color:#000;letter-spacing:0.173px;left:828.84px;">(0)</span><span class="t" style="top:504px;font-size:20px;color:#800080;letter-spacing:0px;transform:scaleX(0.8986);transform-origin:0 0;left:853.81px;"> &lt;= </span><span class="t" style="top:504px;font-size:20px;color:#800080;letter-spacing:0.084px;left:884.80px;">5</span><span class="t" style="top:504px;font-size:20px;color:#008000;letter-spacing:0.042px;left:896.01px;">(T)</span><span class="t" style="top:504px;font-size:20px;color:#000080;letter-spacing:-0.406px;left:921.68px;">  AND</span></div>
<div class="ln"><span class="t" style="top:532px;font-size:20px;color:#ffa500;letter-spacing:-0.367px;left:497.20px;">(F) </span><span class="t" style="top:532px;font-size:20px;color:#ffa500;letter-spacing:0px;transform:scaleX(0.9309);transform-origin:0 0;left:526.82px;">[FALSE]</span><span class="t" style="top:532px;font-size:20px;color:#800080;letter-spacing:-0.191px;left:595.13px;">) </span><span class="t" style="top:532px;font-size:20px;color:#800080;letter-spacing:-0.480px;left:606.97px;">Repeat </span><span class="t" style="top:532px;font-size:20px;color:#800080;letter-spacing:-0.451px;left:673.67px;">every </span><span class="t" style="top:532px;font-size:20px;color:#800080;letter-spacing:-0.182px;left:725.44px;">0:01:00</span></div>
<div class="ln"><span class="t" style="top:564px;font-size:20px;color:#800080;letter-spacing:0.226px;left:536.80px;">Notify </span><span class="t" style="top:564px;font-size:20px;color:#800080;letter-spacing:0.240px;left:595.07px;">mums </span><span class="t" style="top:564px;font-size:20px;color:#800080;letter-spacing:0.144px;left:656.27px;">Hubitat </span><span class="t" style="top:564px;font-size:20px;color:#800080;letter-spacing:-0.032px;left:726.36px;">tracker, </span><span class="t" style="top:564px;font-size:20px;color:#800080;letter-spacing:0.045px;left:797.22px;">richards </span><span class="t" style="top:564px;font-size:20px;color:#800080;letter-spacing:-0.218px;left:874.33px;">iPhone </span><span class="t" style="top:564px;font-size:20px;color:#800080;letter-spacing:0.144px;left:940.64px;">Hubitat </span><span class="t" style="top:564px;font-size:20px;color:#800080;letter-spacing:0.032px;left:1010.73px;">tracker </span><span class="t" style="top:564px;font-size:20px;color:#800080;letter-spacing:-0.221px;left:1077.67px;">and </span><span class="t" style="top:564px;font-size:20px;color:#800080;letter-spacing:-0.460px;left:1115.73px;">Speak </span><span class="t" style="top:564px;font-size:20px;color:#800080;letter-spacing:-0.162px;left:1175.23px;">on </span><span class="t" style="top:564px;font-size:20px;color:#800080;letter-spacing:-0.239px;left:1202.56px;">Sonos </span><span class="t" style="top:564px;font-size:20px;color:#800080;letter-spacing:-0.099px;left:1263.39px;">Move </span><span class="t" style="top:564px;font-size:20px;color:#800080;letter-spacing:-0.440px;left:1317.37px;">Sonos, </span><span class="t" style="top:564px;font-size:20px;color:#800080;letter-spacing:-0.239px;left:1382.11px;">Sonos </span><span class="t" style="top:564px;font-size:20px;color:#800080;letter-spacing:-0.392px;left:1442.95px;">Roam </span><span class="t" style="top:564px;font-size:20px;color:#800080;letter-spacing:-0.409px;left:1499.89px;">Sonos,</span></div>
<div class="ln"><span class="t" style="top:592px;font-size:20px;color:#800080;letter-spacing:0.124px;left:457.60px;">Office </span><span class="t" style="top:592px;font-size:20px;color:#800080;letter-spacing:-0.120px;left:515.91px;">Sonos(volume: </span><span class="t" style="top:592px;font-size:20px;color:#800080;letter-spacing:-0.148px;left:653.20px;">100): </span><span class="t" style="top:592px;font-size:20px;color:#800080;letter-spacing:-0.327px;left:703.47px;">'These </span><span class="t" style="top:592px;font-size:20px;color:#800080;letter-spacing:0.016px;left:766.14px;">premises </span><span class="t" style="top:592px;font-size:20px;color:#800080;letter-spacing:-0.108px;left:852.99px;">our </span><span class="t" style="top:592px;font-size:20px;color:#800080;letter-spacing:0.109px;left:887.02px;">protected </span><span class="t" style="top:592px;font-size:20px;color:#800080;letter-spacing:-0.380px;left:977.07px;">by </span><span class="t" style="top:592px;font-size:20px;color:#800080;letter-spacing:0px;transform:scaleX(0.9454);transform-origin:0 0;left:1002.62px;">a </span><span class="t" style="top:592px;font-size:20px;color:#800080;letter-spacing:0.027px;left:1018.39px;">close </span><span class="t" style="top:592px;font-size:20px;color:#800080;letter-spacing:0.240px;left:1070.80px;">circuit </span><span class="t" style="top:592px;font-size:20px;color:#800080;letter-spacing:-0.051px;left:1130.52px;">surveillance </span><span class="t" style="top:592px;font-size:20px;color:#800080;letter-spacing:-0.054px;left:1241.03px;">system!  </span><span class="t" style="top:592px;font-size:20px;color:#800080;letter-spacing:0px;transform:scaleX(0.9308);transform-origin:0 0;left:1320.55px;">I </span><span class="t" style="top:592px;font-size:20px;color:#800080;letter-spacing:-0.213px;left:1330.91px;">Don't </span><span class="t" style="top:592px;font-size:20px;color:#800080;letter-spacing:-0.121px;left:1381.25px;">Think </span><span class="t" style="top:592px;font-size:20px;color:#800080;letter-spacing:-0.013px;left:1435.00px;">You </span><span class="t" style="top:592px;font-size:20px;color:#800080;letter-spacing:-0.239px;left:1474.26px;">Should </span><span class="t" style="top:592px;font-size:20px;color:#800080;letter-spacing:0px;transform:scaleX(0.9387);transform-origin:0 0;left:1540.43px;">Be</span></div>
<div class="ln"><span class="t" style="top:620px;font-size:20px;color:#800080;letter-spacing:-0.380px;left:457.60px;">Here! </span><span class="t" style="top:620px;font-size:20px;color:#800080;letter-spacing:-0.003px;left:509.79px;">You </span><span class="t" style="top:620px;font-size:20px;color:#800080;letter-spacing:-0.100px;left:549.09px;">our </span><span class="t" style="top:620px;font-size:20px;color:#800080;letter-spacing:0.001px;left:583.15px;">currently </span><span class="t" style="top:620px;font-size:20px;color:#800080;letter-spacing:-0.126px;left:665.41px;">being </span><span class="t" style="top:620px;font-size:20px;color:#800080;letter-spacing:0.279px;left:719.16px;">filmed </span><span class="t" style="top:620px;font-size:20px;color:#800080;letter-spacing:-0.162px;left:780.02px;">on </span><span class="t" style="top:620px;font-size:20px;color:#800080;letter-spacing:-0.144px;left:807.34px;">4k </span><span class="t" style="top:620px;font-size:20px;color:#800080;letter-spacing:-0.211px;left:833.60px;">hd </span><span class="t" style="top:620px;font-size:20px;color:#800080;letter-spacing:-0.190px;left:860.78px;">cameras, </span><span class="t" style="top:620px;font-size:20px;color:#800080;letter-spacing:-0.221px;left:946.87px;">and </span><span class="t" style="top:620px;font-size:20px;color:#800080;letter-spacing:0.177px;left:984.92px;">this </span><span class="t" style="top:620px;font-size:20px;color:#800080;letter-spacing:0.023px;left:1022.50px;">is </span><span class="t" style="top:620px;font-size:20px;color:#800080;letter-spacing:-0.007px;left:1042.57px;">sent </span><span class="t" style="top:620px;font-size:20px;color:#800080;letter-spacing:-0.221px;left:1085.89px;">and </span><span class="t" style="top:620px;font-size:20px;color:#800080;letter-spacing:0.077px;left:1123.94px;">stored </span><span class="t" style="top:620px;font-size:20px;color:#800080;letter-spacing:-0.112px;left:1185.64px;">in </span><span class="t" style="top:620px;font-size:20px;color:#800080;letter-spacing:-0.086px;left:1206.42px;">the </span><span class="t" style="top:620px;font-size:20px;color:#800080;letter-spacing:-0.167px;left:1239.44px;">cloud, </span><span class="t" style="top:620px;font-size:20px;color:#800080;letter-spacing:0.006px;left:1297.21px;">while </span><span class="t" style="top:620px;font-size:20px;color:#800080;letter-spacing:0.010px;left:1348.38px;">also </span><span class="t" style="top:620px;font-size:20px;color:#800080;letter-spacing:0.219px;left:1390.68px;">contacting </span><span class="t" style="top:620px;font-size:20px;color:#800080;letter-spacing:0.088px;left:1489.82px;">the</span></div>
<div class="ln"><span class="t" style="top:648px;font-size:20px;color:#800080;letter-spacing:-0.017px;left:457.60px;">owners </span><span class="t" style="top:648px;font-size:20px;color:#800080;letter-spacing:-0.223px;left:527.51px;">and </span><span class="t" style="top:648px;font-size:20px;color:#800080;letter-spacing:-0.088px;left:565.56px;">the </span><span class="t" style="top:648px;font-size:20px;color:#800080;letter-spacing:0.009px;left:598.56px;">police. </span><span class="t" style="top:648px;font-size:20px;color:#800080;letter-spacing:0.205px;left:662.01px;">If </span><span class="t" style="top:648px;font-size:20px;color:#800080;letter-spacing:-0.266px;left:679.30px;">you </span><span class="t" style="top:648px;font-size:20px;color:#800080;letter-spacing:-0.144px;left:716.05px;">can </span><span class="t" style="top:648px;font-size:20px;color:#800080;letter-spacing:0.229px;left:753.28px;">find </span><span class="t" style="top:648px;font-size:20px;color:#800080;letter-spacing:-0.120px;left:792.24px;">my </span><span class="t" style="top:648px;font-size:20px;color:#800080;letter-spacing:0.195px;left:824.10px;">button </span><span class="t" style="top:648px;font-size:20px;color:#800080;letter-spacing:-0.266px;left:886.64px;">you </span><span class="t" style="top:648px;font-size:20px;color:#800080;letter-spacing:-0.144px;left:923.39px;">can </span><span class="t" style="top:648px;font-size:20px;color:#800080;letter-spacing:0.024px;left:960.62px;">deactivate </span><span class="t" style="top:648px;font-size:20px;color:#800080;letter-spacing:-0.167px;left:1057.62px;">me. </span><span class="t" style="top:648px;font-size:20px;color:#800080;letter-spacing:-0.177px;left:1095.86px;">But </span><span class="t" style="top:648px;font-size:20px;color:#800080;letter-spacing:-0.194px;left:1130.73px;">your </span><span class="t" style="top:648px;font-size:20px;color:#800080;letter-spacing:0.148px;left:1174.23px;">girlfriend </span><span class="t" style="top:648px;font-size:20px;color:#800080;letter-spacing:0.222px;left:1258.13px;">told </span><span class="t" style="top:648px;font-size:20px;color:#800080;letter-spacing:-0.118px;left:1297.05px;">me </span><span class="t" style="top:648px;font-size:20px;color:#800080;letter-spacing:-0.266px;left:1330.04px;">you </span><span class="t" style="top:648px;font-size:20px;color:#800080;letter-spacing:0.062px;left:1366.79px;">wasn't </span><span class="t" style="top:648px;font-size:20px;color:#800080;letter-spacing:-0.398px;left:1428.85px;">very </span><span class="t" style="top:648px;font-size:20px;color:#800080;letter-spacing:0.014px;left:1470.20px;">good </span><span class="t" style="top:648px;font-size:20px;color:#800080;letter-spacing:0.339px;left:1520.33px;">at</span></div>
<div class="ln"><span class="t" style="top:676px;font-size:20px;color:#800080;letter-spacing:0.102px;left:457.60px;">that. </span><span class="t" style="top:676px;font-size:20px;color:#800080;letter-spacing:-0.401px;left:502.69px;">The </span><span class="t" style="top:676px;font-size:20px;color:#800080;letter-spacing:0px;transform:scaleX(0.9255);transform-origin:0 0;left:541.12px;">%device% </span><span class="t" style="top:676px;font-size:20px;color:#800080;letter-spacing:-0.180px;left:632.68px;">has </span><span class="t" style="top:676px;font-size:20px;color:#800080;letter-spacing:-0.187px;left:669.78px;">your </span><span class="t" style="top:676px;font-size:20px;color:#800080;letter-spacing:-0.019px;left:713.31px;">exact </span><span class="t" style="top:676px;font-size:20px;color:#800080;letter-spacing:0.194px;left:766.55px;">location </span><span class="t" style="top:676px;font-size:20px;color:#800080;letter-spacing:0.236px;left:842.80px;">with </span><span class="t" style="top:676px;font-size:20px;color:#800080;letter-spacing:0.260px;left:885.11px;">its </span><span class="t" style="top:676px;font-size:20px;color:#800080;letter-spacing:0.237px;left:911.71px;">micro </span><span class="t" style="top:676px;font-size:20px;color:#800080;letter-spacing:-0.077px;left:967.59px;">camera. </span><span class="t" style="top:676px;font-size:20px;color:#800080;letter-spacing:-0.108px;left:1044.78px;">Video </span><span class="t" style="top:676px;font-size:20px;color:#800080;letter-spacing:-0.143px;left:1100.49px;">Linked </span><span class="t" style="top:676px;font-size:20px;color:#800080;letter-spacing:0.069px;left:1163.99px;">Maintained </span><span class="t" style="top:676px;font-size:20px;color:#800080;letter-spacing:-0.309px;left:1268.16px;">Recorded </span><span class="t" style="top:676px;font-size:20px;color:#800080;letter-spacing:0.069px;left:1357.66px;">Voice </span><span class="t" style="top:676px;font-size:20px;color:#800080;letter-spacing:-0.215px;left:1412.56px;">and </span><span class="t" style="top:676px;font-size:20px;color:#800080;letter-spacing:-0.006px;left:1450.63px;">Video</span></div>
<div class="ln"><span class="t" style="top:704px;font-size:20px;color:#800080;letter-spacing:-0.266px;left:457.60px;">Surveillance, </span><span class="t" style="top:704px;font-size:20px;color:#800080;letter-spacing:-0.121px;left:573.94px;">can </span><span class="t" style="top:704px;font-size:20px;color:#800080;letter-spacing:-0.199px;left:611.27px;">and </span><span class="t" style="top:704px;font-size:20px;color:#800080;letter-spacing:0.239px;left:649.41px;">will </span><span class="t" style="top:704px;font-size:20px;color:#800080;letter-spacing:-0.349px;left:683.95px;">be </span><span class="t" style="top:704px;font-size:20px;color:#800080;letter-spacing:-0.156px;left:710.71px;">used </span><span class="t" style="top:704px;font-size:20px;color:#800080;letter-spacing:-0.096px;left:758.87px;">in </span><span class="t" style="top:704px;font-size:20px;color:#800080;letter-spacing:-0.067px;left:779.71px;">the </span><span class="t" style="top:704px;font-size:20px;color:#800080;letter-spacing:0.186px;left:812.80px;">court </span><span class="t" style="top:704px;font-size:20px;color:#800080;letter-spacing:0.349px;left:863.95px;">of </span><span class="t" style="top:704px;font-size:20px;color:#800080;letter-spacing:0.247px;left:887.25px;">law</span><span class="t" style="top:704px;font-size:20px;color:#000;letter-spacing:-0.226px;left:918.00px;">(These </span><span class="t" style="top:704px;font-size:20px;color:#000;letter-spacing:0.047px;left:984.24px;">premises </span><span class="t" style="top:704px;font-size:20px;color:#000;letter-spacing:-0.081px;left:1071.37px;">our </span><span class="t" style="top:704px;font-size:20px;color:#000;letter-spacing:0.139px;left:1105.51px;">protected </span><span class="t" style="top:704px;font-size:20px;color:#000;letter-spacing:-0.352px;left:1195.85px;">by </span><span class="t" style="top:704px;font-size:20px;color:#000;letter-spacing:0px;transform:scaleX(0.9485);transform-origin:0 0;left:1221.48px;">a </span><span class="t" style="top:704px;font-size:20px;color:#000;letter-spacing:0.055px;left:1237.31px;">close </span><span class="t" style="top:704px;font-size:20px;color:#000;letter-spacing:0.265px;left:1289.89px;">circuit </span><span class="t" style="top:704px;font-size:20px;color:#000;letter-spacing:-0.024px;left:1349.81px;">surveillance </span><span class="t" style="top:704px;font-size:20px;color:#000;letter-spacing:-0.026px;left:1460.68px;">system!  </span><span class="t" style="top:704px;font-size:20px;color:#000;letter-spacing:-0.124px;left:1540.46px;">I</span></div>
<div class="ln"><span class="t" style="top:732px;font-size:20px;color:#000;letter-spacing:-0.217px;left:457.60px;">Don't </span><span class="t" style="top:732px;font-size:20px;color:#000;letter-spacing:-0.125px;left:507.92px;">Think </span><span class="t" style="top:732px;font-size:20px;color:#000;letter-spacing:-0.017px;left:561.64px;">You </span><span class="t" style="top:732px;font-size:20px;color:#000;letter-spacing:-0.243px;left:600.88px;">Should </span><span class="t" style="top:732px;font-size:20px;color:#000;letter-spacing:0px;transform:scaleX(0.9287);transform-origin:0 0;left:667.02px;">Be </span><span class="t" style="top:732px;font-size:20px;color:#000;letter-spacing:-0.393px;left:694.91px;">Here! </span><span class="t" style="top:732px;font-size:20px;color:#000;letter-spacing:-0.017px;left:747.03px;">You </span><span class="t" style="top:732px;font-size:20px;color:#000;letter-spacing:-0.112px;left:786.27px;">our </span><span class="t" style="top:732px;font-size:20px;color:#000;letter-spacing:-0.011px;left:820.29px;">currently </span><span class="t" style="top:732px;font-size:20px;color:#000;letter-spacing:-0.138px;left:902.43px;">being </span><span class="t" style="top:732px;font-size:20px;color:#000;letter-spacing:0.266px;left:956.10px;">filmed </span><span class="t" style="top:732px;font-size:20px;color:#000;letter-spacing:-0.175px;left:1016.87px;">on </span><span class="t" style="top:732px;font-size:20px;color:#000;letter-spacing:-0.157px;left:1044.16px;">4k </span><span class="t" style="top:732px;font-size:20px;color:#000;letter-spacing:-0.224px;left:1070.38px;">hd </span><span class="t" style="top:732px;font-size:20px;color:#000;letter-spacing:-0.204px;left:1097.52px;">cameras, </span><span class="t" style="top:732px;font-size:20px;color:#000;letter-spacing:-0.235px;left:1183.49px;">and </span><span class="t" style="top:732px;font-size:20px;color:#000;letter-spacing:0.167px;left:1221.49px;">this </span><span class="t" style="top:732px;font-size:20px;color:#000;letter-spacing:0.013px;left:1259.01px;">is </span><span class="t" style="top:732px;font-size:20px;color:#000;letter-spacing:-0.020px;left:1279.05px;">sent </span><span class="t" style="top:732px;font-size:20px;color:#000;letter-spacing:-0.235px;left:1322.31px;">and </span><span class="t" style="top:732px;font-size:20px;color:#000;letter-spacing:0.064px;left:1360.31px;">stored </span><span class="t" style="top:732px;font-size:20px;color:#000;letter-spacing:-0.122px;left:1421.92px;">in </span><span class="t" style="top:732px;font-size:20px;color:#000;letter-spacing:-0.098px;left:1442.68px;">the </span><span class="t" style="top:732px;font-size:20px;color:#000;letter-spacing:-0.103px;left:1475.65px;">cloud,</span></div>
<div class="ln"><span class="t" style="top:760px;font-size:20px;color:#000;letter-spacing:0.015px;left:457.60px;">while </span><span class="t" style="top:760px;font-size:20px;color:#000;letter-spacing:0.019px;left:508.83px;">also </span><span class="t" style="top:760px;font-size:20px;color:#000;letter-spacing:0.229px;left:551.17px;">contacting </span><span class="t" style="top:760px;font-size:20px;color:#000;letter-spacing:-0.077px;left:650.43px;">the </span><span class="t" style="top:760px;font-size:20px;color:#000;letter-spacing:-0.004px;left:683.48px;">owners </span><span class="t" style="top:760px;font-size:20px;color:#000;letter-spacing:-0.211px;left:753.48px;">and </span><span class="t" style="top:760px;font-size:20px;color:#000;letter-spacing:-0.077px;left:791.57px;">the </span><span class="t" style="top:760px;font-size:20px;color:#000;letter-spacing:0.019px;left:824.62px;">police. </span><span class="t" style="top:760px;font-size:20px;color:#000;letter-spacing:0.213px;left:888.15px;">If </span><span class="t" style="top:760px;font-size:20px;color:#000;letter-spacing:-0.254px;left:905.46px;">you </span><span class="t" style="top:760px;font-size:20px;color:#000;letter-spacing:-0.132px;left:942.26px;">can </span><span class="t" style="top:760px;font-size:20px;color:#000;letter-spacing:0.239px;left:979.54px;">find </span><span class="t" style="top:760px;font-size:20px;color:#000;letter-spacing:-0.106px;left:1018.55px;">my </span><span class="t" style="top:760px;font-size:20px;color:#000;letter-spacing:0.207px;left:1050.45px;">button </span><span class="t" style="top:760px;font-size:20px;color:#000;letter-spacing:-0.254px;left:1113.07px;">you </span><span class="t" style="top:760px;font-size:20px;color:#000;letter-spacing:-0.132px;left:1149.87px;">can </span><span class="t" style="top:760px;font-size:20px;color:#000;letter-spacing:0.035px;left:1187.15px;">deactivate </span><span class="t" style="top:760px;font-size:20px;color:#000;letter-spacing:-0.155px;left:1284.28px;">me. </span><span class="t" style="top:760px;font-size:20px;color:#000;letter-spacing:-0.166px;left:1322.57px;">But </span><span class="t" style="top:760px;font-size:20px;color:#000;letter-spacing:-0.183px;left:1357.48px;">your </span><span class="t" style="top:760px;font-size:20px;color:#000;letter-spacing:0.158px;left:1401.03px;">girlfriend </span><span class="t" style="top:760px;font-size:20px;color:#000;letter-spacing:0.232px;left:1485.04px;">told </span><span class="t" style="top:760px;font-size:20px;color:#000;letter-spacing:0.145px;left:1524.01px;">me</span></div>
<div class="ln"><span class="t" style="top:788px;font-size:20px;color:#000;letter-spacing:-0.262px;left:457.60px;">you </span><span class="t" style="top:788px;font-size:20px;color:#000;letter-spacing:0.066px;left:494.36px;">wasn't </span><span class="t" style="top:788px;font-size:20px;color:#000;letter-spacing:-0.394px;left:556.45px;">very </span><span class="t" style="top:788px;font-size:20px;color:#000;letter-spacing:0.018px;left:597.82px;">good </span><span class="t" style="top:788px;font-size:20px;color:#000;letter-spacing:0.021px;left:647.97px;">at </span><span class="t" style="top:788px;font-size:20px;color:#000;letter-spacing:0.098px;left:670.28px;">that. </span><span class="t" style="top:788px;font-size:20px;color:#000;letter-spacing:-0.405px;left:715.36px;">The </span><span class="t" style="top:788px;font-size:20px;color:#000;letter-spacing:-0.251px;left:753.77px;">Back </span><span class="t" style="top:788px;font-size:20px;color:#000;letter-spacing:-0.275px;left:802.54px;">Door </span><span class="t" style="top:788px;font-size:20px;color:#000;letter-spacing:-0.308px;left:850.07px;">Sensor </span><span class="t" style="top:788px;font-size:20px;color:#000;letter-spacing:-0.185px;left:916.85px;">has </span><span class="t" style="top:788px;font-size:20px;color:#000;letter-spacing:-0.191px;left:953.93px;">your </span><span class="t" style="top:788px;font-size:20px;color:#000;letter-spacing:-0.023px;left:997.44px;">exact </span><span class="t" style="top:788px;font-size:20px;color:#000;letter-spacing:0.190px;left:1050.66px;">location </span><span class="t" style="top:788px;font-size:20px;color:#000;letter-spacing:0.232px;left:1126.88px;">with </span><span class="t" style="top:788px;font-size:20px;color:#000;letter-spacing:0.257px;left:1169.17px;">its </span><span class="t" style="top:788px;font-size:20px;color:#000;letter-spacing:0.233px;left:1195.76px;">micro </span><span class="t" style="top:788px;font-size:20px;color:#000;letter-spacing:-0.082px;left:1251.61px;">camera. </span><span class="t" style="top:788px;font-size:20px;color:#000;letter-spacing:-0.112px;left:1328.77px;">Video </span><span class="t" style="top:788px;font-size:20px;color:#000;letter-spacing:-0.147px;left:1384.45px;">Linked </span><span class="t" style="top:788px;font-size:20px;color:#000;letter-spacing:0.134px;left:1447.92px;">Maintained</span></div>
<div class="ln"><span class="t" style="top:816px;font-size:20px;color:#000;letter-spacing:-0.297px;left:457.60px;">Recorded </span><span class="t" style="top:816px;font-size:20px;color:#000;letter-spacing:0.081px;left:547.21px;">Voice </span><span class="t" style="top:816px;font-size:20px;color:#000;letter-spacing:-0.204px;left:602.17px;">and </span><span class="t" style="top:816px;font-size:20px;color:#000;letter-spacing:-0.097px;left:640.30px;">Video </span><span class="t" style="top:816px;font-size:20px;color:#000;letter-spacing:-0.269px;left:696.07px;">Surveillance, </span><span class="t" style="top:816px;font-size:20px;color:#000;letter-spacing:-0.125px;left:812.36px;">can </span><span class="t" style="top:816px;font-size:20px;color:#000;letter-spacing:-0.204px;left:849.68px;">and </span><span class="t" style="top:816px;font-size:20px;color:#000;letter-spacing:0.235px;left:887.80px;">will </span><span class="t" style="top:816px;font-size:20px;color:#000;letter-spacing:-0.353px;left:922.32px;">be </span><span class="t" style="top:816px;font-size:20px;color:#000;letter-spacing:-0.160px;left:949.07px;">used </span><span class="t" style="top:816px;font-size:20px;color:#000;letter-spacing:-0.099px;left:997.21px;">in </span><span class="t" style="top:816px;font-size:20px;color:#000;letter-spacing:-0.071px;left:1018.04px;">the </span><span class="t" style="top:816px;font-size:20px;color:#000;letter-spacing:0.182px;left:1051.11px;">court </span><span class="t" style="top:816px;font-size:20px;color:#000;letter-spacing:0.346px;left:1102.24px;">of </span><span class="t" style="top:816px;font-size:20px;color:#000;letter-spacing:0.135px;left:1125.52px;">law)'</span></div>
<div class="ln"><span class="t" style="top:853px;font-size:20px;color:#800080;letter-spacing:0px;transform:scaleX(0.8943);transform-origin:0 0;left:497.20px;">END-REP</span></div>
<div class="ln"><span class="t" style="top:897px;font-size:20px;color:#800080;letter-spacing:0px;transform:scaleX(0.9044);transform-origin:0 0;left:457.60px;">END-IF</span></div>
<span class="t" style="top:942px;font-size:22px;color:#008000;letter-spacing:1.706px;left:492.8px;-webkit-text-stroke:0.6px #008000;">Create New Action</span>
<span class="t" style="top:1026px;font-size:21.4px;color:#212121;letter-spacing:-0.184px;left:378px;">You can create and manage</span>
<span class="t" style="top:1026px;font-size:21.4px;color:#212121;letter-spacing:1.391px;left:646.8px;-webkit-text-stroke:0.5px #212121;">Conditions</span>
<span class="t" style="top:1026px;font-size:21.4px;color:#212121;letter-spacing:-0.055px;left:767px;">used in Conditional Actions and Expressions below:</span>
<div style="left:953px;top:533px;width:94px;height:26px;border-radius:2.5px;background:#4d4c51;box-shadow:0 1px 4px rgba(0,0,0,.28)"></div>
<span class="t" style="top:537px;font-size:15.3px;color:#fff;letter-spacing:0.272px;left:961.5px;-webkit-text-stroke:0.3px #fff;">Edit Action</span>
<svg style="left:1591.9px;top:362.0px;" width="24" height="24" viewBox="0 0 24 24"><path d="M12 21.3 V3.2999999999999994 M4.5 10.6 L12 3.099999999999999 L19.5 10.6" fill="none" stroke="#000" stroke-width="2.7" stroke-linecap="round" stroke-linejoin="miter"/></svg>
<svg style="left:1631.9px;top:362.3px;" width="24" height="24" viewBox="0 0 24 24"><path d="M12 2.9000000000000004 V20.5 M4.7 13.4 L12 20.700000000000003 L19.3 13.4" fill="none" stroke="#000" stroke-width="2.7" stroke-linecap="round" stroke-linejoin="miter"/></svg>
<svg style="left:1674.4px;top:362.6px;" width="24" height="24" viewBox="0 0 24 24"><path d="M2.5 12 H21.5 M12 2.5 V21.5" fill="none" stroke="#000" stroke-width="3.1"/></svg>
<svg style="left:1721.9px;top:363.9px;" width="24" height="24" viewBox="0 0 24 24"><path d="M4.1 4.1 L19.9 19.9 M19.9 4.1 L4.1 19.9" fill="none" stroke="#000" stroke-width="2.7"/></svg>
<svg style="left:1768.8px;top:365.0px;" width="28" height="16" viewBox="0 0 28 16"><g fill="none" stroke="#000" stroke-width="1.25"><ellipse cx="5.9" cy="3.6" rx="2.75" ry="2.55" transform="rotate(-25 5.9 3.6)"/><ellipse cx="3.4" cy="12.6" rx="2.75" ry="2.45" transform="rotate(-25 3.4 12.6)"/></g><path d="M5.6 10.6 L11.6 7.2 L27.6 2.9 L27.7 3.8 L13.6 9.0 L6.2 11.7 Z" fill="#000"/><path d="M8.3 4.6 L13.3 6.6 L25.9 10.7 L25.2 12.1 L21.5 11.9 L12.0 8.4 L7.9 5.9 Z" fill="#000"/></svg>
<svg style="left:1812.8px;top:362.6px;" width="18.0" height="22.0" viewBox="0 0 18 22"><g fill="#000"><rect x="6.6" y="0.3" width="4.8" height="2.6" rx="0.8"/><rect x="0.2" y="2.6" width="17.6" height="2.2" rx="0.4"/><path d="M1.9 6.2 H16.1 V20.6 Q16.1 21.6 15.1 21.6 H2.9 Q1.9 21.6 1.9 20.6 Z"/></g><g fill="#fff"><rect x="7.6" y="1.2" width="2.8" height="1.4"/><rect x="4.3" y="8.2" width="1.5" height="11.3"/><rect x="8.25" y="8.2" width="1.5" height="11.3"/><rect x="12.2" y="8.2" width="1.5" height="11.3"/></g></svg>
<svg style="left:400px;top:359px;" width="26" height="26" viewBox="400 359 26 26"><g fill="#fff" stroke="#000" stroke-width="1.9" stroke-linejoin="miter"><path d="M402.3 365.6 L406.4 361.3 H415.1 V376.8 H402.3 Z"/><path d="M402.3 365.6 H406.4 V361.3" fill="none" stroke-width="1.5"/><path d="M411.3 371.6 L415.4 367.3 H424.1 V382.8 H411.3 Z"/><path d="M411.3 371.6 H415.4 V367.3" fill="none" stroke-width="1.5"/></g></svg>
<svg style="left:401.3px;top:410.54999999999995px;" width="24" height="24" viewBox="0 0 24 24"><rect x="3.3000000000000007" y="3.3000000000000007" width="17.4" height="17.4" rx="1.8" fill="none" stroke="#800080" stroke-width="2.25"/></svg>
<svg style="left:1632.2px;top:410.74999999999994px;" width="24" height="24" viewBox="0 0 24 24"><path d="M12 4.3 V19.099999999999998 M5.7 12.999999999999998 L12 19.3 L18.3 12.999999999999998" fill="none" stroke="#800080" stroke-width="2.2" stroke-linecap="round" stroke-linejoin="miter"/></svg>
<svg style="left:1674.4px;top:414.34999999999997px;" width="24" height="24" viewBox="0 0 24 24"><path d="M3.1999999999999993 12 H20.8 M12 3.1999999999999993 V20.8" fill="none" stroke="#008000" stroke-width="2.3"/></svg>
<svg style="left:1722.2px;top:410.54999999999995px;" width="24" height="24" viewBox="0 0 24 24"><rect x="3.3000000000000007" y="3.3000000000000007" width="17.4" height="17.4" rx="1.8" fill="none" stroke="#800080" stroke-width="2.25"/></svg>
<svg style="left:1768.8px;top:416.44999999999993px;" width="28" height="16" viewBox="0 0 28 16"><g fill="none" stroke="#800080" stroke-width="1.25"><ellipse cx="5.9" cy="3.6" rx="2.75" ry="2.55" transform="rotate(-25 5.9 3.6)"/><ellipse cx="3.4" cy="12.6" rx="2.75" ry="2.45" transform="rotate(-25 3.4 12.6)"/></g><path d="M5.6 10.6 L11.6 7.2 L27.6 2.9 L27.7 3.8 L13.6 9.0 L6.2 11.7 Z" fill="#800080"/><path d="M8.3 4.6 L13.3 6.6 L25.9 10.7 L25.2 12.1 L21.5 11.9 L12.0 8.4 L7.9 5.9 Z" fill="#800080"/></svg>
<svg style="left:1814.26px;top:415.69px;" width="15.48" height="18.919999999999998" viewBox="0 0 18 22"><g fill="#ff0000"><rect x="6.6" y="0.3" width="4.8" height="2.6" rx="0.8"/><rect x="0.2" y="2.6" width="17.6" height="2.2" rx="0.4"/><path d="M1.9 6.2 H16.1 V20.6 Q16.1 21.6 15.1 21.6 H2.9 Q1.9 21.6 1.9 20.6 Z"/></g><g fill="#fff"><rect x="7.6" y="1.2" width="2.8" height="1.4"/><rect x="4.3" y="8.2" width="1.5" height="11.3"/><rect x="8.25" y="8.2" width="1.5" height="11.3"/><rect x="12.2" y="8.2" width="1.5" height="11.3"/></g></svg>
<svg style="left:401.3px;top:462.4px;" width="24" height="24" viewBox="0 0 24 24"><rect x="3.3000000000000007" y="3.3000000000000007" width="17.4" height="17.4" rx="1.8" fill="none" stroke="#800080" stroke-width="2.25"/></svg>
<svg style="left:1591.9px;top:462.59999999999997px;" width="24" height="24" viewBox="0 0 24 24"><path d="M12 19.7 V4.8999999999999995 M5.7 11.0 L12 4.7 L18.3 11.0" fill="none" stroke="#800080" stroke-width="2.2" stroke-linecap="round" stroke-linejoin="miter"/></svg>
<svg style="left:1632.2px;top:462.59999999999997px;" width="24" height="24" viewBox="0 0 24 24"><path d="M12 4.3 V19.099999999999998 M5.7 12.999999999999998 L12 19.3 L18.3 12.999999999999998" fill="none" stroke="#800080" stroke-width="2.2" stroke-linecap="round" stroke-linejoin="miter"/></svg>
<svg style="left:1674.4px;top:466.2px;" width="24" height="24" viewBox="0 0 24 24"><path d="M3.1999999999999993 12 H20.8 M12 3.1999999999999993 V20.8" fill="none" stroke="#008000" stroke-width="2.3"/></svg>
<svg style="left:1722.2px;top:462.4px;" width="24" height="24" viewBox="0 0 24 24"><rect x="3.3000000000000007" y="3.3000000000000007" width="17.4" height="17.4" rx="1.8" fill="none" stroke="#800080" stroke-width="2.25"/></svg>
<svg style="left:1768.8px;top:468.29999999999995px;" width="28" height="16" viewBox="0 0 28 16"><g fill="none" stroke="#800080" stroke-width="1.25"><ellipse cx="5.9" cy="3.6" rx="2.75" ry="2.55" transform="rotate(-25 5.9 3.6)"/><ellipse cx="3.4" cy="12.6" rx="2.75" ry="2.45" transform="rotate(-25 3.4 12.6)"/></g><path d="M5.6 10.6 L11.6 7.2 L27.6 2.9 L27.7 3.8 L13.6 9.0 L6.2 11.7 Z" fill="#800080"/><path d="M8.3 4.6 L13.3 6.6 L25.9 10.7 L25.2 12.1 L21.5 11.9 L12.0 8.4 L7.9 5.9 Z" fill="#800080"/></svg>
<svg style="left:1814.26px;top:467.54px;" width="15.48" height="18.919999999999998" viewBox="0 0 18 22"><g fill="#ff0000"><rect x="6.6" y="0.3" width="4.8" height="2.6" rx="0.8"/><rect x="0.2" y="2.6" width="17.6" height="2.2" rx="0.4"/><path d="M1.9 6.2 H16.1 V20.6 Q16.1 21.6 15.1 21.6 H2.9 Q1.9 21.6 1.9 20.6 Z"/></g><g fill="#fff"><rect x="7.6" y="1.2" width="2.8" height="1.4"/><rect x="4.3" y="8.2" width="1.5" height="11.3"/><rect x="8.25" y="8.2" width="1.5" height="11.3"/><rect x="12.2" y="8.2" width="1.5" height="11.3"/></g></svg>
<svg style="left:401.3px;top:514.4px;" width="24" height="24" viewBox="0 0 24 24"><rect x="3.3000000000000007" y="3.3000000000000007" width="17.4" height="17.4" rx="1.8" fill="none" stroke="#800080" stroke-width="2.25"/></svg>
<svg style="left:1591.9px;top:514.6px;" width="24" height="24" viewBox="0 0 24 24"><path d="M12 19.7 V4.8999999999999995 M5.7 11.0 L12 4.7 L18.3 11.0" fill="none" stroke="#800080" stroke-width="2.2" stroke-linecap="round" stroke-linejoin="miter"/></svg>
<svg style="left:1632.2px;top:514.6px;" width="24" height="24" viewBox="0 0 24 24"><path d="M12 4.3 V19.099999999999998 M5.7 12.999999999999998 L12 19.3 L18.3 12.999999999999998" fill="none" stroke="#800080" stroke-width="2.2" stroke-linecap="round" stroke-linejoin="miter"/></svg>
<svg style="left:1674.4px;top:518.1999999999999px;" width="24" height="24" viewBox="0 0 24 24"><path d="M3.1999999999999993 12 H20.8 M12 3.1999999999999993 V20.8" fill="none" stroke="#008000" stroke-width="2.3"/></svg>
<svg style="left:1722.2px;top:514.4px;" width="24" height="24" viewBox="0 0 24 24"><rect x="3.3000000000000007" y="3.3000000000000007" width="17.4" height="17.4" rx="1.8" fill="none" stroke="#800080" stroke-width="2.25"/></svg>
<svg style="left:1768.8px;top:520.3px;" width="28" height="16" viewBox="0 0 28 16"><g fill="none" stroke="#800080" stroke-width="1.25"><ellipse cx="5.9" cy="3.6" rx="2.75" ry="2.55" transform="rotate(-25 5.9 3.6)"/><ellipse cx="3.4" cy="12.6" rx="2.75" ry="2.45" transform="rotate(-25 3.4 12.6)"/></g><path d="M5.6 10.6 L11.6 7.2 L27.6 2.9 L27.7 3.8 L13.6 9.0 L6.2 11.7 Z" fill="#800080"/><path d="M8.3 4.6 L13.3 6.6 L25.9 10.7 L25.2 12.1 L21.5 11.9 L12.0 8.4 L7.9 5.9 Z" fill="#800080"/></svg>
<svg style="left:1814.26px;top:519.54px;" width="15.48" height="18.919999999999998" viewBox="0 0 18 22"><g fill="#ff0000"><rect x="6.6" y="0.3" width="4.8" height="2.6" rx="0.8"/><rect x="0.2" y="2.6" width="17.6" height="2.2" rx="0.4"/><path d="M1.9 6.2 H16.1 V20.6 Q16.1 21.6 15.1 21.6 H2.9 Q1.9 21.6 1.9 20.6 Z"/></g><g fill="#fff"><rect x="7.6" y="1.2" width="2.8" height="1.4"/><rect x="4.3" y="8.2" width="1.5" height="11.3"/><rect x="8.25" y="8.2" width="1.5" height="11.3"/><rect x="12.2" y="8.2" width="1.5" height="11.3"/></g></svg>
<svg style="left:401.3px;top:686.3499999999999px;" width="24" height="24" viewBox="0 0 24 24"><rect x="3.3000000000000007" y="3.3000000000000007" width="17.4" height="17.4" rx="1.8" fill="none" stroke="#800080" stroke-width="2.25"/></svg>
<svg style="left:1591.9px;top:686.55px;" width="24" height="24" viewBox="0 0 24 24"><path d="M12 19.7 V4.8999999999999995 M5.7 11.0 L12 4.7 L18.3 11.0" fill="none" stroke="#800080" stroke-width="2.2" stroke-linecap="round" stroke-linejoin="miter"/></svg>
<svg style="left:1632.2px;top:686.55px;" width="24" height="24" viewBox="0 0 24 24"><path d="M12 4.3 V19.099999999999998 M5.7 12.999999999999998 L12 19.3 L18.3 12.999999999999998" fill="none" stroke="#800080" stroke-width="2.2" stroke-linecap="round" stroke-linejoin="miter"/></svg>
<svg style="left:1674.4px;top:690.1499999999999px;" width="24" height="24" viewBox="0 0 24 24"><path d="M3.1999999999999993 12 H20.8 M12 3.1999999999999993 V20.8" fill="none" stroke="#008000" stroke-width="2.3"/></svg>
<svg style="left:1722.2px;top:686.3499999999999px;" width="24" height="24" viewBox="0 0 24 24"><rect x="3.3000000000000007" y="3.3000000000000007" width="17.4" height="17.4" rx="1.8" fill="none" stroke="#800080" stroke-width="2.25"/></svg>
<svg style="left:1768.8px;top:692.2499999999999px;" width="28" height="16" viewBox="0 0 28 16"><g fill="none" stroke="#800080" stroke-width="1.25"><ellipse cx="5.9" cy="3.6" rx="2.75" ry="2.55" transform="rotate(-25 5.9 3.6)"/><ellipse cx="3.4" cy="12.6" rx="2.75" ry="2.45" transform="rotate(-25 3.4 12.6)"/></g><path d="M5.6 10.6 L11.6 7.2 L27.6 2.9 L27.7 3.8 L13.6 9.0 L6.2 11.7 Z" fill="#800080"/><path d="M8.3 4.6 L13.3 6.6 L25.9 10.7 L25.2 12.1 L21.5 11.9 L12.0 8.4 L7.9 5.9 Z" fill="#800080"/></svg>
<svg style="left:1814.26px;top:691.4899999999999px;" width="15.48" height="18.919999999999998" viewBox="0 0 18 22"><g fill="#ff0000"><rect x="6.6" y="0.3" width="4.8" height="2.6" rx="0.8"/><rect x="0.2" y="2.6" width="17.6" height="2.2" rx="0.4"/><path d="M1.9 6.2 H16.1 V20.6 Q16.1 21.6 15.1 21.6 H2.9 Q1.9 21.6 1.9 20.6 Z"/></g><g fill="#fff"><rect x="7.6" y="1.2" width="2.8" height="1.4"/><rect x="4.3" y="8.2" width="1.5" height="11.3"/><rect x="8.25" y="8.2" width="1.5" height="11.3"/><rect x="12.2" y="8.2" width="1.5" height="11.3"/></g></svg>
<svg style="left:401.3px;top:849.9px;" width="24" height="24" viewBox="0 0 24 24"><rect x="3.3000000000000007" y="3.3000000000000007" width="17.4" height="17.4" rx="1.8" fill="none" stroke="#800080" stroke-width="2.25"/></svg>
<svg style="left:1591.9px;top:850.1px;" width="24" height="24" viewBox="0 0 24 24"><path d="M12 19.7 V4.8999999999999995 M5.7 11.0 L12 4.7 L18.3 11.0" fill="none" stroke="#800080" stroke-width="2.2" stroke-linecap="round" stroke-linejoin="miter"/></svg>
<svg style="left:1632.2px;top:850.1px;" width="24" height="24" viewBox="0 0 24 24"><path d="M12 4.3 V19.099999999999998 M5.7 12.999999999999998 L12 19.3 L18.3 12.999999999999998" fill="none" stroke="#800080" stroke-width="2.2" stroke-linecap="round" stroke-linejoin="miter"/></svg>
<svg style="left:1674.4px;top:853.6999999999999px;" width="24" height="24" viewBox="0 0 24 24"><path d="M3.1999999999999993 12 H20.8 M12 3.1999999999999993 V20.8" fill="none" stroke="#008000" stroke-width="2.3"/></svg>
<svg style="left:1722.2px;top:849.9px;" width="24" height="24" viewBox="0 0 24 24"><rect x="3.3000000000000007" y="3.3000000000000007" width="17.4" height="17.4" rx="1.8" fill="none" stroke="#800080" stroke-width="2.25"/></svg>
<svg style="left:1768.8px;top:855.8px;" width="28" height="16" viewBox="0 0 28 16"><g fill="none" stroke="#800080" stroke-width="1.25"><ellipse cx="5.9" cy="3.6" rx="2.75" ry="2.55" transform="rotate(-25 5.9 3.6)"/><ellipse cx="3.4" cy="12.6" rx="2.75" ry="2.45" transform="rotate(-25 3.4 12.6)"/></g><path d="M5.6 10.6 L11.6 7.2 L27.6 2.9 L27.7 3.8 L13.6 9.0 L6.2 11.7 Z" fill="#800080"/><path d="M8.3 4.6 L13.3 6.6 L25.9 10.7 L25.2 12.1 L21.5 11.9 L12.0 8.4 L7.9 5.9 Z" fill="#800080"/></svg>
<svg style="left:1814.26px;top:855.04px;" width="15.48" height="18.919999999999998" viewBox="0 0 18 22"><g fill="#ff0000"><rect x="6.6" y="0.3" width="4.8" height="2.6" rx="0.8"/><rect x="0.2" y="2.6" width="17.6" height="2.2" rx="0.4"/><path d="M1.9 6.2 H16.1 V20.6 Q16.1 21.6 15.1 21.6 H2.9 Q1.9 21.6 1.9 20.6 Z"/></g><g fill="#fff"><rect x="7.6" y="1.2" width="2.8" height="1.4"/><rect x="4.3" y="8.2" width="1.5" height="11.3"/><rect x="8.25" y="8.2" width="1.5" height="11.3"/><rect x="12.2" y="8.2" width="1.5" height="11.3"/></g></svg>
<svg style="left:401.3px;top:893.2px;" width="24" height="24" viewBox="0 0 24 24"><rect x="3.3000000000000007" y="3.3000000000000007" width="17.4" height="17.4" rx="1.8" fill="none" stroke="#800080" stroke-width="2.25"/></svg>
<svg style="left:1591.9px;top:893.4000000000001px;" width="24" height="24" viewBox="0 0 24 24"><path d="M12 19.7 V4.8999999999999995 M5.7 11.0 L12 4.7 L18.3 11.0" fill="none" stroke="#800080" stroke-width="2.2" stroke-linecap="round" stroke-linejoin="miter"/></svg>
<svg style="left:1674.4px;top:897.0px;" width="24" height="24" viewBox="0 0 24 24"><path d="M3.1999999999999993 12 H20.8 M12 3.1999999999999993 V20.8" fill="none" stroke="#008000" stroke-width="2.3"/></svg>
<svg style="left:1722.2px;top:893.2px;" width="24" height="24" viewBox="0 0 24 24"><rect x="3.3000000000000007" y="3.3000000000000007" width="17.4" height="17.4" rx="1.8" fill="none" stroke="#800080" stroke-width="2.25"/></svg>
<svg style="left:1768.8px;top:899.1px;" width="28" height="16" viewBox="0 0 28 16"><g fill="none" stroke="#800080" stroke-width="1.25"><ellipse cx="5.9" cy="3.6" rx="2.75" ry="2.55" transform="rotate(-25 5.9 3.6)"/><ellipse cx="3.4" cy="12.6" rx="2.75" ry="2.45" transform="rotate(-25 3.4 12.6)"/></g><path d="M5.6 10.6 L11.6 7.2 L27.6 2.9 L27.7 3.8 L13.6 9.0 L6.2 11.7 Z" fill="#800080"/><path d="M8.3 4.6 L13.3 6.6 L25.9 10.7 L25.2 12.1 L21.5 11.9 L12.0 8.4 L7.9 5.9 Z" fill="#800080"/></svg>
<svg style="left:1814.26px;top:898.34px;" width="15.48" height="18.919999999999998" viewBox="0 0 18 22"><g fill="#ff0000"><rect x="6.6" y="0.3" width="4.8" height="2.6" rx="0.8"/><rect x="0.2" y="2.6" width="17.6" height="2.2" rx="0.4"/><path d="M1.9 6.2 H16.1 V20.6 Q16.1 21.6 15.1 21.6 H2.9 Q1.9 21.6 1.9 20.6 Z"/></g><g fill="#fff"><rect x="7.6" y="1.2" width="2.8" height="1.4"/><rect x="4.3" y="8.2" width="1.5" height="11.3"/><rect x="8.25" y="8.2" width="1.5" height="11.3"/><rect x="12.2" y="8.2" width="1.5" height="11.3"/></g></svg>
<svg style="left:400.8px;top:939.5px;" width="24" height="24" viewBox="0 0 24 24"><path d="M1.5 12 H22.5 M12 1.5 V22.5" fill="none" stroke="#008000" stroke-width="2.6"/></svg>
<svg style="left:462px;top:940px;" width="24" height="22" viewBox="0 0 24 22"><path d="M21.3 11 H3.6 M11.2 3.3 L3.4 11 L11.2 18.7" fill="none" stroke="#008000" stroke-width="2.7"/></svg>
<div style="left:0px;top:1065.0px;width:1920px;height:46px;background:#392f2b;"></div>
<span class="t" style="top:1079px;font-size:18.7px;color:#fff;letter-spacing:0.108px;left:14px;">Documentation</span>
<span class="t" style="top:1079px;font-size:18.7px;color:#fff;letter-spacing:0.062px;left:165px;">Community</span>
<span class="t" style="top:1079px;font-size:18.7px;color:#fff;letter-spacing:-0.062px;left:283.5px;">Videos</span>
<span class="t" style="top:1079px;font-size:18.7px;color:#fff;letter-spacing:0px;transform:scaleX(0.8826);transform-origin:0 0;left:364px;">FAQ</span>
<span class="t" style="top:1079px;font-size:16px;color:#fff;letter-spacing:-0.009px;left:1566px;">Terms of Service</span>
<span class="t" style="top:1079px;font-size:16px;color:#fff;letter-spacing:-0.068px;left:1708.5px;">Copyright 2022 Hubitat, Inc.</span>
<div style="left:0;top:33px;width:1920px;height:1076px;border-radius:12px;border:1.5px solid rgba(160,152,172,.62);border-right-width:1.2px"></div>
</div>
<span class="t" style="top:7px;font-size:18.8px;color:#fff;font-weight:700;letter-spacing:-0.341px;left:71.5px;">Safari</span>
<span class="t" style="top:7px;font-size:18.8px;color:#fff;letter-spacing:0px;transform:scaleX(0.9417);transform-origin:0 0;left:149.5px;">File</span>
<span class="t" style="top:7px;font-size:18.8px;color:#fff;letter-spacing:0px;transform:scaleX(0.9575);transform-origin:0 0;left:206px;">Edit</span>
<span class="t" style="top:7px;font-size:18.8px;color:#fff;letter-spacing:0px;transform:scaleX(0.9536);transform-origin:0 0;left:264.5px;">View</span>
<span class="t" style="top:7px;font-size:18.8px;color:#fff;letter-spacing:-0.240px;left:331.5px;">History</span>
<span class="t" style="top:7px;font-size:18.8px;color:#fff;letter-spacing:0px;transform:scaleX(0.9528);transform-origin:0 0;left:416.5px;">Bookmarks</span>
<span class="t" style="top:7px;font-size:18.8px;color:#fff;letter-spacing:0px;transform:scaleX(0.9579);transform-origin:0 0;left:534px;">Window</span>
<span class="t" style="top:7px;font-size:18.8px;color:#fff;letter-spacing:0px;transform:scaleX(0.9446);transform-origin:0 0;left:626px;">Help</span>
<span class="t" style="top:7px;font-size:18.8px;color:#fff;letter-spacing:-0.269px;left:1747.5px;">Thu 20 Oct</span>
<span class="t" style="top:7px;font-size:18.8px;color:#fff;letter-spacing:0.125px;left:1848px;">20:35</span>
<svg style="left:0;top:0" width="1920" height="33" viewBox="0 0 1920 33"><path transform="translate(34.9 14.6) scale(1.1 1.12) translate(-34.1 -14.8)" fill="#f6f3fb" d="M38.2 8.6 C38.9 7.7 39.4 6.5 39.3 5.2 C38.2 5.3 36.9 6 36.1 6.9 C35.4 7.7 34.8 8.9 35 10.1 C36.2 10.2 37.4 9.5 38.2 8.6 Z M41.9 19.2 C41.5 20.2 41.2 20.7 40.6 21.6 C39.8 22.8 38.7 24.3 37.4 24.3 C36.2 24.3 35.9 23.5 34.3 23.5 C32.7 23.5 32.3 24.3 31.1 24.4 C29.8 24.4 28.8 23 28 21.8 C25.7 18.4 25.5 14.4 26.9 12.3 C27.9 10.8 29.5 9.9 31 9.9 C32.5 9.9 33.5 10.8 34.7 10.8 C35.9 10.8 36.6 9.9 38.3 9.9 C39.6 9.9 41 10.6 42 11.9 C38.8 13.7 39.3 18.2 41.9 19.2 Z"/><path fill="#fff" d="M1163.6 7.8 L1146.6 15.2 L1154.6 16.6 L1156 24.2 Z"/><circle cx="1194.4" cy="8.2" r="2.9" fill="#b39cec"/><circle cx="1202.6000000000001" cy="8.2" r="2.9" fill="#b39cec"/><circle cx="1210.8000000000002" cy="8.2" r="2.9" fill="#b39cec"/><circle cx="1194.4" cy="16.2" r="2.9" fill="#b39cec"/><circle cx="1202.6000000000001" cy="16.2" r="2.9" fill="#b39cec"/><circle cx="1194.4" cy="24.2" r="2.9" fill="#b39cec"/><path fill="#fff" d="M1208.8 11.4 L1216.4 25.8 H1201.2 Z"/><path d="M1208.8 16.4 V21 M1208.8 22.8 V23.8" stroke="#3a0fa8" stroke-width="1.5" fill="none"/><path fill="#fff" d="M1251.9 3.9 L1265.2 16.4 H1262.2 V27 H1241.6 V16.4 H1238.6 Z"/><g fill="none" stroke="#3a10a6" stroke-width="1.4"><path d="M1251.9 13.6 V27 M1251.9 23.6 L1247.4 19.2 M1251.9 22 L1256.4 17.6"/><circle cx="1251.9" cy="11.6" r="2"/><circle cx="1246.6" cy="18.2" r="1.8"/><circle cx="1257.2" cy="16.6" r="1.8"/></g><rect x="1291" y="7.8" width="23.4" height="16.6" rx="3.4" fill="none" stroke="#fff" stroke-width="1.7"/><g fill="#fff"><rect x="1293.8" y="10.8" width="2.4" height="10.6"/><rect x="1298.2" y="12.4" width="1.9" height="7.6"/><rect x="1301.5" y="12.4" width="1.9" height="7.6"/><rect x="1304.8" y="12.4" width="1.9" height="7.6"/><rect x="1308.1" y="12.4" width="1.9" height="7.6"/><rect x="1311" y="12.4" width="1.4" height="7.6"/></g><circle cx="1349.3" cy="16.7" r="8.2" fill="none" stroke="#fff" stroke-width="1.6"/><circle cx="1349.3" cy="13.9" r="3.2" fill="#fff"/><path fill="#fff" d="M1343.4 21.6 Q1349.3 15.4 1355.2 21.6 Q1352.8 24.2 1349.3 24.2 Q1345.8 24.2 1343.4 21.6 Z"/><path d="M1386.8 11.8 L1395.4 21 L1391.2 25.4 V7.8 L1395.4 12.4 L1386.8 21.4" fill="none" stroke="#fff" stroke-width="1.5" stroke-linejoin="round"/><circle cx="1433.6" cy="16.7" r="8.2" fill="none" stroke="#fff" stroke-width="1.6"/><path fill="#fff" d="M1431 12.6 L1438 16.7 L1431 20.8 Z"/><path d="M1473.4 14.2 A8.2 8.2 0 1 1 1474.4 21.6" fill="none" stroke="#fff" stroke-width="1.6"/><path d="M1470.6 12.8 L1473.4 17.2 L1476.8 13.4" fill="none" stroke="#fff" stroke-width="1.5"/><path d="M1481 11.6 V17 L1484.6 19.6" fill="none" stroke="#fff" stroke-width="1.6" stroke-linecap="round"/><rect x="1518" y="9" width="29.6" height="14.6" rx="4.2" fill="none" stroke="#cfc3f2" stroke-width="1.3"/><rect x="1520.1" y="11.1" width="25.4" height="10.4" rx="2.5" fill="#fff"/><path d="M1549.6 13.6 Q1551.4 14.2 1551.4 16.3 Q1551.4 18.4 1549.6 19 Z" fill="#cfc3f2"/><g fill="none" stroke="#fff" stroke-width="2.5" stroke-linecap="butt"><path d="M1577.4 13.4 Q1586.8 4.6 1596.2 13.4"/><path d="M1580.8 17 Q1586.8 11.4 1592.8 17"/></g><path fill="#fff" d="M1583.8 20 Q1586.8 17.2 1589.8 20 L1586.8 23.2 Z"/><circle cx="1629.4" cy="14.8" r="6" fill="none" stroke="#fff" stroke-width="2"/><path d="M1633.8 19.4 L1639.6 25" stroke="#fff" stroke-width="2.4" stroke-linecap="round"/><rect x="1665.8" y="8.4" width="17.8" height="7.6" rx="3.8" fill="none" stroke="#fff" stroke-width="1.5"/><circle cx="1670.2" cy="12.2" r="2.3" fill="#fff"/><rect x="1665.2" y="17.8" width="19" height="8" rx="4" fill="#fff"/><circle cx="1679.8" cy="21.8" r="2.3" fill="#3a10a6"/><defs><radialGradient id="siri" cx="52%" cy="56%" r="56%"><stop offset="0" stop-color="#e4f6ff"/><stop offset=".28" stop-color="#6fdbe6"/><stop offset=".6" stop-color="#3e62de"/><stop offset="1" stop-color="#21135f"/></radialGradient><radialGradient id="siri2" cx="14%" cy="52%" r="46%"><stop offset="0" stop-color="#ff4a86" stop-opacity=".95"/><stop offset="1" stop-color="#ff4a86" stop-opacity="0"/></radialGradient><radialGradient id="siri3" cx="58%" cy="92%" r="40%"><stop offset="0" stop-color="#3ee0a8" stop-opacity=".8"/><stop offset="1" stop-color="#3ee0a8" stop-opacity="0"/></radialGradient></defs><circle cx="1715.8" cy="16.3" r="10" fill="url(#siri)"/><circle cx="1715.8" cy="16.3" r="10" fill="url(#siri2)"/><circle cx="1715.8" cy="16.3" r="10" fill="url(#siri3)"/></svg>
<div style="left:50.5px;top:1119px;width:1818.5px;height:73.5px;border-radius:17.5px;border:1.2px solid rgba(190,170,230,.30);background:linear-gradient(90deg,#1a1130 0%,#1b1233 50%,#22123c 56%,#2f1350 60%,#47156d 65%,#4f1676 70%,#4b1572 76%,#3f1265 82%,#33105a 88%,#2a0d4d 94%,#220b43 100%)"></div>
<svg style="left:0;top:1110px;overflow:visible" width="1920" height="90" viewBox="0 1110 1920 90"><defs><clipPath id="cpsq"><rect x="0" y="0" width="49.0" height="49.0" rx="11.2"/></clipPath><linearGradient id="gfin" x1="0" y1="0" x2="0" y2="1"><stop offset="0" stop-color="#2aa8f8"/><stop offset="1" stop-color="#1468e4"/></linearGradient><linearGradient id="glp" x1="0" y1="0" x2="0" y2="1"><stop offset="0" stop-color="#d2d2d6"/><stop offset="1" stop-color="#b4b4ba"/></linearGradient><linearGradient id="gsaf" x1="0" y1="0" x2="0" y2="1"><stop offset="0" stop-color="#2bb0f7"/><stop offset="1" stop-color="#1a6ce6"/></linearGradient><linearGradient id="gsafb" x1="0" y1="0" x2="0" y2="1"><stop offset="0" stop-color="#ffffff"/><stop offset="1" stop-color="#e4e4e6"/></linearGradient><radialGradient id="gff" cx="62%" cy="22%" r="85%"><stop offset="0" stop-color="#fff36b"/><stop offset=".32" stop-color="#ffb31f"/><stop offset=".62" stop-color="#ff5b2a"/><stop offset="1" stop-color="#f0246c"/></radialGradient><radialGradient id="gffp" cx="50%" cy="35%" r="70%"><stop offset="0" stop-color="#9a5cf0"/><stop offset="1" stop-color="#5a2bd0"/></radialGradient><radialGradient id="gmsgb" cx="50%" cy="30%" r="75%"><stop offset="0" stop-color="#ffffff"/><stop offset="1" stop-color="#d2ecd4"/></radialGradient><linearGradient id="gmsg" x1="0" y1="0" x2="0" y2="1"><stop offset="0" stop-color="#5ef06a"/><stop offset="1" stop-color="#0bb82c"/></linearGradient><linearGradient id="gmail" x1="0" y1="0" x2="0" y2="1"><stop offset="0" stop-color="#1c7df2"/><stop offset="1" stop-color="#21c3fc"/></linearGradient><linearGradient id="gmailb" x1="0" y1="0" x2="0" y2="1"><stop offset="0" stop-color="#ffffff"/><stop offset="1" stop-color="#e2e2e2"/></linearGradient><linearGradient id="gph" x1="0" y1="0" x2="0" y2="1"><stop offset="0" stop-color="#ffffff"/><stop offset="1" stop-color="#f0f0f0"/></linearGradient><linearGradient id="gft" x1="0" y1="0" x2="0" y2="1"><stop offset="0" stop-color="#5df36c"/><stop offset="1" stop-color="#0cb82e"/></linearGradient><linearGradient id="gftb" x1="0" y1="0" x2="0" y2="1"><stop offset="0" stop-color="#ffffff"/><stop offset="1" stop-color="#d4edd6"/></linearGradient><linearGradient id="gct" x1="0" y1="0" x2="0" y2="1"><stop offset="0" stop-color="#b5844a"/><stop offset="1" stop-color="#a07038"/></linearGradient><linearGradient id="grm" x1="0" y1="0" x2="0" y2="1"><stop offset="0" stop-color="#ffffff"/><stop offset="1" stop-color="#f0f0f0"/></linearGradient><linearGradient id="gnt" x1="0" y1="0" x2="0" y2="1"><stop offset="0" stop-color="#fbfaf6"/><stop offset="1" stop-color="#e9e6dd"/></linearGradient><linearGradient id="gnt2" x1="0" y1="0" x2="0" y2="1"><stop offset="0" stop-color="#fdd23a"/><stop offset="1" stop-color="#f7b814"/></linearGradient><linearGradient id="gtv" x1="0" y1="0" x2="0" y2="1"><stop offset="0" stop-color="#25302c"/><stop offset="1" stop-color="#0f1513"/></linearGradient><linearGradient id="gmu" x1="0" y1="0" x2="0" y2="1"><stop offset="0" stop-color="#fb5c74"/><stop offset="1" stop-color="#f52a44"/></linearGradient><linearGradient id="gpc" x1="0" y1="0" x2="0" y2="1"><stop offset="0" stop-color="#c35ff0"/><stop offset="1" stop-color="#7d2ed0"/></linearGradient><clipPath id="cpnews"><rect x="10" y="10" width="29" height="29" rx="1.5"/></clipPath><linearGradient id="gas" x1="0" y1="0" x2="0" y2="1"><stop offset="0" stop-color="#1cb7fb"/><stop offset="1" stop-color="#1a62e8"/></linearGradient><radialGradient id="gsp" cx="50%" cy="50%" r="50%"><stop offset="0" stop-color="#6a6d70"/><stop offset=".55" stop-color="#8d9094"/><stop offset="1" stop-color="#54575a"/></radialGradient><linearGradient id="gspb" x1="0" y1="0" x2="0" y2="1"><stop offset="0" stop-color="#dfe1e3"/><stop offset="1" stop-color="#8f9295"/></linearGradient><radialGradient id="ghm" cx="50%" cy="60%" r="60%"><stop offset="0" stop-color="#fff3b0"/><stop offset=".35" stop-color="#ffc436"/><stop offset="1" stop-color="#f08a0c"/></radialGradient><linearGradient id="ghmb" x1="0" y1="0" x2="0" y2="1"><stop offset="0" stop-color="#ffffff"/><stop offset="1" stop-color="#f3f3f3"/></linearGradient><linearGradient id="gte" x1="0" y1="0" x2="0" y2="1"><stop offset="0" stop-color="#ffffff"/><stop offset="1" stop-color="#f1f1f1"/></linearGradient><radialGradient id="gfm" cx="50%" cy="50%" r="50%"><stop offset="0" stop-color="#5ae07a"/><stop offset=".7" stop-color="#2ccf5c"/><stop offset="1" stop-color="#1fba4c"/></radialGradient><linearGradient id="gfmb" x1="0" y1="0" x2="0" y2="1"><stop offset="0" stop-color="#f6f6f6"/><stop offset="1" stop-color="#d4d4d4"/></linearGradient><linearGradient id="gdoc" x1="0" y1="0" x2="0" y2="1"><stop offset="0" stop-color="#ffffff"/><stop offset="1" stop-color="#ececec"/></linearGradient><linearGradient id="gtr" x1="0" y1="0" x2="0" y2="1"><stop offset="0" stop-color="#8f8f93"/><stop offset="1" stop-color="#5b5b60"/></linearGradient></defs><g transform="translate(61.50 1129.60)"><rect x="0" y="0" width="49.0" height="49.0" rx="11.2" fill="url(#gfin)" /><g clip-path="url(#cpsq)"><path d="M27.2 0 Q21.6 12 21.4 27.4 H27.6 Q27.2 38 29.6 49 H49 V0 Z" fill="#e9edf4"/><path d="M27.2 0 Q21.6 12 21.4 27.4 H27.6 Q27.2 38 29.6 49" fill="none" stroke="#1c2b4a" stroke-width="0" /></g><path d="M9.8 32.6 Q24.6 42.6 39.4 32.4" fill="none" stroke="#1d2b45" stroke-width="1.7" stroke-linecap="round"/><path d="M12.8 13.4 V18.6 M35.6 13.4 V18.6" stroke="#1d2b45" stroke-width="2.1" stroke-linecap="round"/></g><circle cx="86.0" cy="1188.1" r="2.35" fill="#8f88a8"/><g transform="translate(124.20 1129.60)"><rect x="0" y="0" width="49.0" height="49.0" rx="11.2" fill="url(#glp)" /><rect x="8.2" y="8.4" width="8.8" height="8.6" rx="2.2" fill="#2fd24a" /><rect x="20.1" y="8.4" width="8.8" height="8.6" rx="2.2" fill="#f7b500" /><rect x="32.0" y="8.4" width="8.8" height="8.6" rx="2.2" fill="#f78a00" /><rect x="8.2" y="20.200000000000003" width="8.8" height="8.6" rx="2.2" fill="#e02514" /><rect x="20.1" y="20.200000000000003" width="8.8" height="8.6" rx="2.2" fill="#b9bcc2" /><rect x="32.0" y="20.200000000000003" width="8.8" height="8.6" rx="2.2" fill="#f5365c" /><rect x="8.2" y="32.0" width="8.8" height="8.6" rx="2.2" fill="#a24be0" /><rect x="20.1" y="32.0" width="8.8" height="8.6" rx="2.2" fill="#1a9cf5" /><rect x="32.0" y="32.0" width="8.8" height="8.6" rx="2.2" fill="#27cfa0" /></g><g transform="translate(186.50 1129.60)"><rect x="0" y="0" width="49.0" height="49.0" rx="11.2" fill="url(#gsafb)" /><circle cx="24.5" cy="24.5" r="19.8" fill="url(#gsaf)"/><path d="M40.70 24.50 L43.30 24.50 M41.54 27.50 L43.01 27.76 M40.76 30.42 L42.17 30.93 M38.53 32.60 L40.78 33.90 M37.75 35.62 L38.90 36.58 M35.62 37.75 L36.58 38.90 M32.60 38.53 L33.90 40.78 M30.42 40.76 L30.93 42.17 M27.50 41.54 L27.76 43.01 M24.50 40.70 L24.50 43.30 M21.50 41.54 L21.24 43.01 M18.58 40.76 L18.07 42.17 M16.40 38.53 L15.10 40.78 M13.38 37.75 L12.42 38.90 M11.25 35.62 L10.10 36.58 M10.47 32.60 L8.22 33.90 M8.24 30.42 L6.83 30.93 M7.46 27.50 L5.99 27.76 M8.30 24.50 L5.70 24.50 M7.46 21.50 L5.99 21.24 M8.24 18.58 L6.83 18.07 M10.47 16.40 L8.22 15.10 M11.25 13.38 L10.10 12.42 M13.38 11.25 L12.42 10.10 M16.40 10.47 L15.10 8.22 M18.58 8.24 L18.07 6.83 M21.50 7.46 L21.24 5.99 M24.50 8.30 L24.50 5.70 M27.50 7.46 L27.76 5.99 M30.42 8.24 L30.93 6.83 M32.60 10.47 L33.90 8.22 M35.62 11.25 L36.58 10.10 M37.75 13.38 L38.90 12.42 M38.53 16.40 L40.78 15.10 M40.76 18.58 L42.17 18.07 M41.54 21.50 L43.01 21.24 " stroke="#d6ecff" stroke-width=".7" opacity=".8"/><path d="M38.6 10.6 L26.6 26.6 L22.6 22.6 Z" fill="#f0483c"/><path d="M10.4 38.4 L26.6 26.6 L22.6 22.6 Z" fill="#f4f4f4"/></g><circle cx="211.0" cy="1188.1" r="2.35" fill="#8f88a8"/><g transform="translate(249.00 1130.40) scale(0.98)"><path d="M31.4 -4.6 Q42.6 2.4 44.4 10.6 Q46.4 8.2 46.2 5 Q52.8 13.4 51.8 26.6 Q50.4 42.6 36.4 48.6 Q22.6 53.2 10.4 46 Q-1.4 38 -1.2 24 Q-0.8 12.6 7.8 5.2 Q8 9.2 9.6 11 Q12.2 7.4 17.4 6.4 Q22.8 8.6 26.4 7.2 Q27.6 2 30.4 -3.6 Z" fill="url(#gff)"/><circle cx="26.2" cy="25.4" r="12.4" fill="url(#gffp)"/><path d="M6.6 17.6 Q13.4 13.4 20.6 16.6 Q24.4 18.8 28.6 17.4 Q24.6 22 18.6 21.6 Q15.6 22.4 14.8 26.4 Q10.6 23 6.6 17.6 Z" fill="#ffb31f"/><path d="M12.6 27 Q15.6 38.6 27.4 37.8 Q37.6 36.4 39.4 25.4 Q44.4 34.6 37.4 42.2 Q27.4 49.6 15.4 43.6 Q7.6 37.6 8.4 27.4 Z" fill="#ff6a2a" opacity=".85"/></g><g transform="translate(312.20 1129.60)"><rect x="0" y="0" width="49.0" height="49.0" rx="11.2" fill="url(#gmsg)" /><path d="M24.5 9.6 C34.6 9.6 42 15.4 42 23.4 C42 31.2 34.6 37.2 24.5 37.2 C22.4 37.2 20.4 36.9 18.6 36.4 C16.6 38.4 13.8 39.6 11 39.6 C12.6 38 13.6 35.8 13.6 33.8 C9.6 31.4 7 27.6 7 23.4 C7 15.4 14.4 9.6 24.5 9.6 Z" fill="url(#gmsgb)"/></g><circle cx="336.7" cy="1188.1" r="2.35" fill="#8f88a8"/><g transform="translate(374.50 1129.60)"><rect x="0" y="0" width="49.0" height="49.0" rx="11.2" fill="url(#gmail)" /><rect x="7.4" y="13.6" width="34.2" height="22.6" rx="2.6" fill="url(#gmailb)" /><path d="M8 14.6 L24.5 27.4 L41 14.6" fill="none" stroke="#b9bcc2" stroke-width="1.3"/><path d="M8.2 35.4 L19.4 24.6 M40.8 35.4 L29.6 24.6" fill="none" stroke="#c9ccd2" stroke-width="1"/></g><circle cx="399.0" cy="1188.1" r="2.35" fill="#8f88a8"/><g transform="translate(437.20 1129.60)"><g clip-path="url(#cpsq)"><rect x="0" y="0" width="49.0" height="49.0" rx="0" fill="#5fd36a" /><path d="M0 18 L49 49 H0 Z" fill="#f3f1ec"/><path d="M0 26 L18 38 L10 49 H0 Z" fill="#ec8ac4"/><path d="M27 49 L31 40 L49 49 Z" fill="#f8cd1c"/><path d="M30 49 L36 36 L49 44 V49 Z" fill="#f6f4ee"/><path d="M0 16 L49 46 " stroke="#ffffff" stroke-width="5" fill="none"/><circle cx="43" cy="6" r="12.5" fill="none" stroke="#d9d2e4" stroke-width="3.6"/><circle cx="43" cy="6" r="7.2" fill="none" stroke="#c9bfda" stroke-width="2.6"/><path d="M13.4 0 H24.2 V20 H13.4 Z" fill="#1f7bea"/><path d="M12.4 0 V22 M25.2 0 V22" stroke="#fff" stroke-width="1.6"/></g><circle cx="18.6" cy="30.6" r="10.4" fill="#fff"/><circle cx="18.6" cy="30.6" r="8.6" fill="#2688f2"/><path d="M18.6 24 L23.4 36.2 L18.6 33.4 L13.8 36.2 Z" fill="#fff"/></g><g transform="translate(499.80 1129.60)"><rect x="0" y="0" width="49.0" height="49.0" rx="11.2" fill="url(#gph)" /><ellipse cx="24.5" cy="13.6" rx="5.7" ry="9.4" fill="#f9a31a" opacity=".86" transform="rotate(-90 24.5 24.5)"/><ellipse cx="24.5" cy="13.6" rx="5.7" ry="9.4" fill="#f4d21c" opacity=".86" transform="rotate(-45 24.5 24.5)"/><ellipse cx="24.5" cy="13.6" rx="5.7" ry="9.4" fill="#9ccf3c" opacity=".86" transform="rotate(0 24.5 24.5)"/><ellipse cx="24.5" cy="13.6" rx="5.7" ry="9.4" fill="#35b8a0" opacity=".86" transform="rotate(45 24.5 24.5)"/><ellipse cx="24.5" cy="13.6" rx="5.7" ry="9.4" fill="#4a9ff0" opacity=".86" transform="rotate(90 24.5 24.5)"/><ellipse cx="24.5" cy="13.6" rx="5.7" ry="9.4" fill="#8a78e0" opacity=".86" transform="rotate(135 24.5 24.5)"/><ellipse cx="24.5" cy="13.6" rx="5.7" ry="9.4" fill="#d673c8" opacity=".86" transform="rotate(180 24.5 24.5)"/><ellipse cx="24.5" cy="13.6" rx="5.7" ry="9.4" fill="#f2574a" opacity=".86" transform="rotate(225 24.5 24.5)"/></g><g transform="translate(562.80 1129.60)"><rect x="0" y="0" width="49.0" height="49.0" rx="11.2" fill="url(#gft)" /><rect x="7.6" y="15.4" width="22.8" height="18.4" rx="4.6" fill="url(#gftb)" /><path d="M32.4 22.4 L40.2 16.6 Q41.6 15.8 41.6 17.6 V31.4 Q41.6 33.2 40.2 32.4 L32.4 26.8 Z" fill="#e4f5e5"/></g><g transform="translate(625.50 1129.60)"><g clip-path="url(#cpsq)"><rect x="0" y="0" width="49.0" height="49.0" rx="0" fill="#fbfbfb" /><rect x="0" y="0" width="49.0" height="15.2" rx="0" fill="#f0524a" /></g></g><g transform="translate(688.80 1129.60)"><g clip-path="url(#cpsq)"><rect x="0" y="0" width="49.0" height="49.0" rx="0" fill="url(#gct)" /><rect x="46.4" y="6" width="4" height="12" rx="0" fill="#9fa4aa" /><rect x="46.4" y="18" width="4" height="9" rx="0" fill="#3d8fe6" /><rect x="46.4" y="27" width="4" height="9" rx="0" fill="#f29322" /><rect x="46.4" y="36" width="4" height="8" rx="0" fill="#57c25a" /></g><circle cx="24.5" cy="24.5" r="14.4" fill="#ab7a40" stroke="#9a6c36" stroke-width="1.2"/><circle cx="24.5" cy="20" r="5.2" fill="#96662f"/><path d="M13.6 33.4 Q24.5 22.6 35.4 33.4 Q31 38.6 24.5 38.8 Q18 38.6 13.6 33.4 Z" fill="#96662f"/></g><g transform="translate(750.80 1129.60)"><rect x="0" y="0" width="49.0" height="49.0" rx="11.2" fill="url(#grm)" /><circle cx="9.6" cy="12.4" r="3.4" fill="none" stroke="#2f8af5" stroke-width="1" opacity=".7"/><circle cx="9.6" cy="12.4" r="2.2" fill="#2f8af5"/><path d="M18.4 12.4 H43" stroke="#d0d0d0" stroke-width="1"/><circle cx="9.6" cy="24.5" r="3.4" fill="none" stroke="#f2473e" stroke-width="1" opacity=".7"/><circle cx="9.6" cy="24.5" r="2.2" fill="#f2473e"/><path d="M18.4 24.5 H43" stroke="#d0d0d0" stroke-width="1"/><circle cx="9.6" cy="36.6" r="3.4" fill="none" stroke="#f5972a" stroke-width="1" opacity=".7"/><circle cx="9.6" cy="36.6" r="2.2" fill="#f5972a"/><path d="M18.4 36.6 H43" stroke="#d0d0d0" stroke-width="1"/></g><g transform="translate(813.50 1129.60)"><g clip-path="url(#cpsq)"><rect x="0" y="0" width="49.0" height="49.0" rx="0" fill="url(#gnt)" /><rect x="0" y="0" width="49.0" height="12.8" rx="0" fill="url(#gnt2)" /><path d="M0 21.6 H49 M0 28.6 H49 M0 35.6 H49" stroke="#d8d5cc" stroke-width=".8"/></g></g><g transform="translate(876.20 1129.60)"><rect x="0" y="0" width="49.0" height="49.0" rx="11.2" fill="url(#gtv)" /></g><g transform="translate(938.80 1129.60)"><rect x="0" y="0" width="49.0" height="49.0" rx="11.2" fill="url(#gmu)" /><path d="M19.2 13.2 L35.4 9.2 V31.4 A4.4 3.6 0 1 1 32.6 28.2 V16.6 L22 19.2 V34.6 A4.4 3.6 0 1 1 19.2 31.4 Z" fill="#fff"/></g><g transform="translate(1001.50 1129.60)"><rect x="0" y="0" width="49.0" height="49.0" rx="11.2" fill="url(#gpc)" /><g fill="none" stroke="#fff" stroke-linecap="round"><path d="M14.4 33.2 A15.2 15.2 0 1 1 34.6 33.2" stroke-width="2.5"/><path d="M18.4 28 A9 9 0 1 1 30.6 28" stroke-width="2.4"/></g><circle cx="24.5" cy="21.6" r="3.8" fill="#fff"/><path d="M21.2 29.8 Q21.2 27.4 24.5 27.4 Q27.8 27.4 27.8 29.8 L26.8 40.4 Q26.6 42.2 24.5 42.2 Q22.4 42.2 22.2 40.4 Z" fill="#fff"/></g><g transform="translate(1064.50 1128.80) scale(1 0.985)"><path d="M21.6 -0.6 Q24.5 -2.6 27.4 -0.6 L41.4 37.6 H7.6 Z" fill="#f08a0b"/><path d="M18.2 9.2 H30.8 L33.4 16.4 H15.6 Z" fill="#f2f0ec"/><path d="M12.6 24.4 H36.4 L39.2 32 H9.8 Z" fill="#f2f0ec"/><path d="M6.6 34.4 H42.4 L49 52 Q49.4 53.6 47.6 53.6 H1.4 Q-0.4 53.6 0 52 Z" fill="#f08a0b"/><path d="M10.6 38 Q24.5 47 38.4 38 Q36 45.6 24.5 46.2 Q13 45.6 10.6 38 Z" fill="#d87706"/></g><g transform="translate(1126.80 1129.60)"><rect x="0" y="0" width="49.0" height="49.0" rx="11.2" fill="#fff" /><g clip-path="url(#cpnews)"><rect x="10" y="10" width="29" height="29" fill="#f23852"/><path d="M10 10 L39 39 " stroke="#fff" stroke-width="2.2"/><path d="M22.6 10 L39 26.4" stroke="#fff" stroke-width="2.2" opacity=".0"/><path d="M26 10 H33 V17 Z M16 39 H23 L16 32 Z" fill="#fff" opacity=".0"/><path d="M24.8 10 L39 24.2 V10 Z" fill="#fb8a96"/><path d="M10 24.8 L24.2 39 H10 Z" fill="#fb8a96"/><path d="M25.8 10 L39 23.2 M10 25.8 L23.2 39" stroke="#fff" stroke-width="2.0"/></g></g><g transform="translate(1189.50 1129.60)"><rect x="0" y="0" width="49.0" height="49.0" rx="11.2" fill="url(#gas)" /><g fill="none" stroke="#fff" stroke-width="3.3" stroke-linecap="round"><path d="M24.2 10.2 L11.2 35.2 M21.2 9.8 L36.2 35.2 M7.4 29.6 H33.6 M36.4 29.6 H41.6"/></g></g><circle cx="1214.0" cy="1188.1" r="2.35" fill="#c99cf0"/><g transform="translate(1252.50 1129.60)"><rect x="0" y="0" width="49.0" height="49.0" rx="11.2" fill="url(#gspb)" /><circle cx="24.5" cy="24.5" r="20.6" fill="#4c4f52"/><circle cx="24.5" cy="24.5" r="18.8" fill="none" stroke="#8c9093" stroke-width="2.2" stroke-dasharray="1.5 1.3"/><circle cx="24.5" cy="24.5" r="15.6" fill="url(#gsp)" stroke="#3c3f42" stroke-width="1.4"/><circle cx="24.5" cy="24.5" r="10.4" fill="#777a7e" stroke="#4a4d50" stroke-width="2.4"/><path d="M24.5 24.5 L24.5 9.6 M24.5 24.5 L37.4 32 M24.5 24.5 L11.6 32" stroke="#44474a" stroke-width="2.8"/><circle cx="24.5" cy="24.5" r="3" fill="#3c3f42"/></g><circle cx="1277.0" cy="1188.1" r="2.35" fill="#c99cf0"/><g transform="translate(1342.80 1129.60)"><rect x="0.6" y="0.6" width="47.8" height="47.8" rx="11.2" fill="#1e1e1e" stroke="#a99bb8" stroke-width="1.6"/><rect x="2.6" y="2.6" width="43.8" height="43.8" rx="8.6" fill="#1c1c1c" stroke="#000" stroke-width="1.4"/></g><circle cx="1367.3" cy="1188.1" r="2.35" fill="#c99cf0"/><g transform="translate(1404.40 1128.40) scale(1.045 1.05)"><path d="M24.5 9.4 Q17.4 8.6 13.4 4 Q9.4 0.4 5 -2.6 Q10.6 -5.6 17 -3.4 Q22.6 -0.6 24.5 6 Q26.4 -0.6 32 -3.4 Q38.4 -5.6 44 -2.6 Q39.6 0.4 35.6 4 Q31.6 8.6 24.5 9.4 Z" fill="#6cc04a" stroke="#1a1a1a" stroke-width="1.6" stroke-linejoin="round"/><path d="M24.5 8 Q34.6 7.4 40.4 14.6 Q46.6 20.6 45.6 28.6 Q46 37.6 38.4 42.6 Q33.6 50.6 24.5 51.6 Q15.4 50.6 10.6 42.6 Q3 37.6 3.4 28.6 Q2.4 20.6 8.6 14.6 Q14.4 7.4 24.5 8 Z" fill="#1a1a1a"/><ellipse cx="17" cy="15.2" rx="5.4" ry="4.2" fill="#d1204b"/><ellipse cx="32" cy="15.2" rx="5.4" ry="4.2" fill="#d1204b"/><ellipse cx="24.5" cy="24" rx="6.2" ry="5.4" fill="#d1204b"/><ellipse cx="11.6" cy="24.6" rx="4.4" ry="5.6" fill="#d1204b"/><ellipse cx="37.4" cy="24.6" rx="4.4" ry="5.6" fill="#d1204b"/><ellipse cx="15.6" cy="35.4" rx="5.4" ry="5.2" fill="#d1204b"/><ellipse cx="33.4" cy="35.4" rx="5.4" ry="5.2" fill="#d1204b"/><ellipse cx="24.5" cy="36" rx="4.6" ry="4.6" fill="#d1204b"/><ellipse cx="24.5" cy="46" rx="5.4" ry="3.8" fill="#d1204b"/><ellipse cx="7.6" cy="31.6" rx="2.4" ry="4" fill="#d1204b"/><ellipse cx="41.4" cy="31.6" rx="2.4" ry="4" fill="#d1204b"/></g><circle cx="1430.0" cy="1188.1" r="2.35" fill="#c99cf0"/><g transform="translate(1468.20 1129.60)"><rect x="0" y="0" width="49.0" height="49.0" rx="11.2" fill="url(#ghmb)" /><path d="M24.5 7.4 L36 17.8 V12.4 H39.4 V20.8 L42.4 23.6 H38.4 V39.4 H10.6 V23.6 H6.6 Z" fill="url(#ghm)"/><rect x="21.2" y="22" width="6.6" height="7.6" rx=".8" fill="#fffbe6"/></g><circle cx="1492.7" cy="1188.1" r="2.35" fill="#c99cf0"/><g transform="translate(1530.80 1129.60)"><rect x="0" y="0" width="49.0" height="49.0" rx="11.2" fill="url(#gte)" /><g clip-path="url(#cpsq)"><path d="M0 8.6 H49 M0 13.4 H49 M0 18.2 H49 M0 23 H49 M0 27.8 H49 M0 32.6 H49 M0 37.4 H49 M0 42.2 H49" stroke="#d2d6df" stroke-width=".8"/><path d="M8.2 0 V49" stroke="#f0a9a4" stroke-width=".9"/></g><path d="M43.4 -4.6 L47.6 -2.4 L24.4 44.4 L19.6 50.6 L20.4 42.6 Z" fill="#9fb4cc" stroke="#6f86a2" stroke-width=".8"/><path d="M41.6 -1 L45.8 1.2" stroke="#5f7692" stroke-width="1.2"/><path d="M20.4 42.6 L24.4 44.4 L19.6 50.6 Z" fill="#5a5f66"/></g><circle cx="1555.3" cy="1188.1" r="2.35" fill="#c99cf0"/><g transform="translate(1593.20 1129.60)"><rect x="0" y="0" width="49.0" height="49.0" rx="11.2" fill="url(#gfmb)" /><circle cx="24.5" cy="24.5" r="20.8" fill="url(#gfm)"/><circle cx="24.5" cy="24.5" r="13.6" fill="none" stroke="#7ce894" stroke-width=".9"/><circle cx="24.5" cy="24.5" r="8.4" fill="none" stroke="#7ce894" stroke-width=".9"/><path d="M24.5 24.5 L15.8 5.8 Q24.5 1.8 33.2 5.8 Z" fill="#1e8df0"/><circle cx="24.5" cy="24.5" r="6.2" fill="#fff"/><circle cx="24.5" cy="24.5" r="3.9" fill="#1e7be8"/></g><circle cx="1617.7" cy="1188.1" r="2.35" fill="#c99cf0"/><g transform="translate(1656.20 1129.60)"><rect x="0" y="0" width="49.0" height="49.0" rx="11.2" fill="#41b0ee" /><path d="M24.5 8.6 L34.4 18 V14.6 H37.4 V20.8 L41.8 25 H38 V39 H11 V25 H7.2 Z" fill="#fff"/><g fill="none" stroke="#41b0ee" stroke-width="1.1"><path d="M24.5 39 V17.6 M24.5 34 L18.6 28.6 V24 M24.5 30 L30.4 24.6 V20.6 M24.5 24 L20.6 20.4 M24.5 36.4 L29.6 31.8"/></g><g fill="#41b0ee"><circle cx="24.5" cy="17" r="1.5"/><circle cx="18.6" cy="23.4" r="1.4"/><circle cx="30.4" cy="20" r="1.4"/><circle cx="20.2" cy="20" r="1.2"/><circle cx="30" cy="31.4" r="1.3"/></g></g><circle cx="1680.7" cy="1188.1" r="2.35" fill="#c99cf0"/><g transform="translate(1749.60 1129.00) scale(0.935 1.01)"><path d="M3.6 0 H28.6 L42.6 9.6 V52 H4.6 V20 H3.6 Z" fill="url(#gdoc)"/><path d="M28.6 0 V16.4 H42.6 V9.6 H38 Z" fill="#fafafa" stroke="#e2e2e2" stroke-width=".8"/></g><g transform="translate(1809.70 1128.00) scale(1.0 1.0)"><path d="M3.4 7 H45.6 L41.4 47.6 Q40.8 51.6 36.4 51.6 H12.6 Q8.2 51.6 7.6 47.6 Z" fill="url(#gtr)" opacity=".92"/><ellipse cx="24.5" cy="7.4" rx="21.2" ry="4.4" fill="#a9a9ae"/><ellipse cx="24.5" cy="7.4" rx="19" ry="3.2" fill="#6d6d72"/><path d="M9 4.6 L14.6 -1.4 L21.6 2.6 L27.4 -2.4 L34.6 1.2 L40.4 4.6 L36 8.6 H13 Z" fill="#f1f1f1"/><path d="M13.4 2 L16.6 5.6 L19.6 2.4 Z" fill="#3a9c8a"/><path d="M27.4 0.4 L30.6 5 L33.6 1.6 Z" fill="#c8553a"/><path d="M21.4 4 L24 7 L26.4 4.2 Z" fill="#39424c"/><path d="M12 14 L14.4 47 M24.5 14 V48 M37 14 L34.6 47" stroke="#a5a5aa" stroke-width="1" opacity=".5"/></g><rect x="1321.8" y="1128" width="1.2" height="56" fill="#8a5fb0" opacity=".9"/><rect x="1725.6" y="1128" width="1.2" height="56" fill="#6f55a0" opacity=".9"/><circle cx="355.6" cy="1135.3" r="11.4" fill="#f2423a"/><circle cx="418.4" cy="1135.3" r="11.4" fill="#f2423a"/><circle cx="793.6" cy="1135.3" r="11.4" fill="#f2423a"/></svg>
<span class="t" style="top:1128px;font-size:14px;color:#fff;letter-spacing:0px;transform:scaleX(0.9115);transform-origin:0 0;left:348.60px;">10</span>
<span class="t" style="top:1128px;font-size:14px;color:#fff;letter-spacing:0px;transform:scaleX(0.9372);transform-origin:0 0;left:411.20px;">69</span>
<span class="t" style="top:1128px;font-size:14px;color:#fff;left:793.6px;transform:translateX(-50%);">1</span>
<span class="t" style="top:1134px;font-size:9.6px;color:#fff;font-weight:700;letter-spacing:0.117px;left:639.75px;">OCT</span>
<span class="t" style="top:1147px;font-size:29px;color:#2a2a2a;letter-spacing:1.234px;left:633.25px;">20</span>
<span class="t" style="top:1143px;font-size:23px;color:#fff;letter-spacing:0.609px;left:901.15px;">tv</span>
<span class="t" style="top:1139px;font-size:12.5px;color:#f0f0f0;font-weight:700;font-family:'Liberation Mono',monospace;letter-spacing:0.984px;left:1352.50px;">&gt;_</span>
<svg style="left:883px;top:1142px" width="16" height="20" viewBox="26 4 17 21"><path fill="#fff" d="M38.2 8.6 C38.9 7.7 39.4 6.5 39.3 5.2 C38.2 5.3 36.9 6 36.1 6.9 C35.4 7.7 34.8 8.9 35 10.1 C36.2 10.2 37.4 9.5 38.2 8.6 Z M41.9 19.2 C41.5 20.2 41.2 20.7 40.6 21.6 C39.8 22.8 38.7 24.3 37.4 24.3 C36.2 24.3 35.9 23.5 34.3 23.5 C32.7 23.5 32.3 24.3 31.1 24.4 C29.8 24.4 28.8 23 28 21.8 C25.7 18.4 25.5 14.4 26.9 12.3 C27.9 10.8 29.5 9.9 31 9.9 C32.5 9.9 33.5 10.8 34.7 10.8 C35.9 10.8 36.6 9.9 38.3 9.9 C39.6 9.9 41 10.6 42 11.9 C38.8 13.7 39.3 18.2 41.9 19.2 Z"/></svg>
</div>
</body></html>
